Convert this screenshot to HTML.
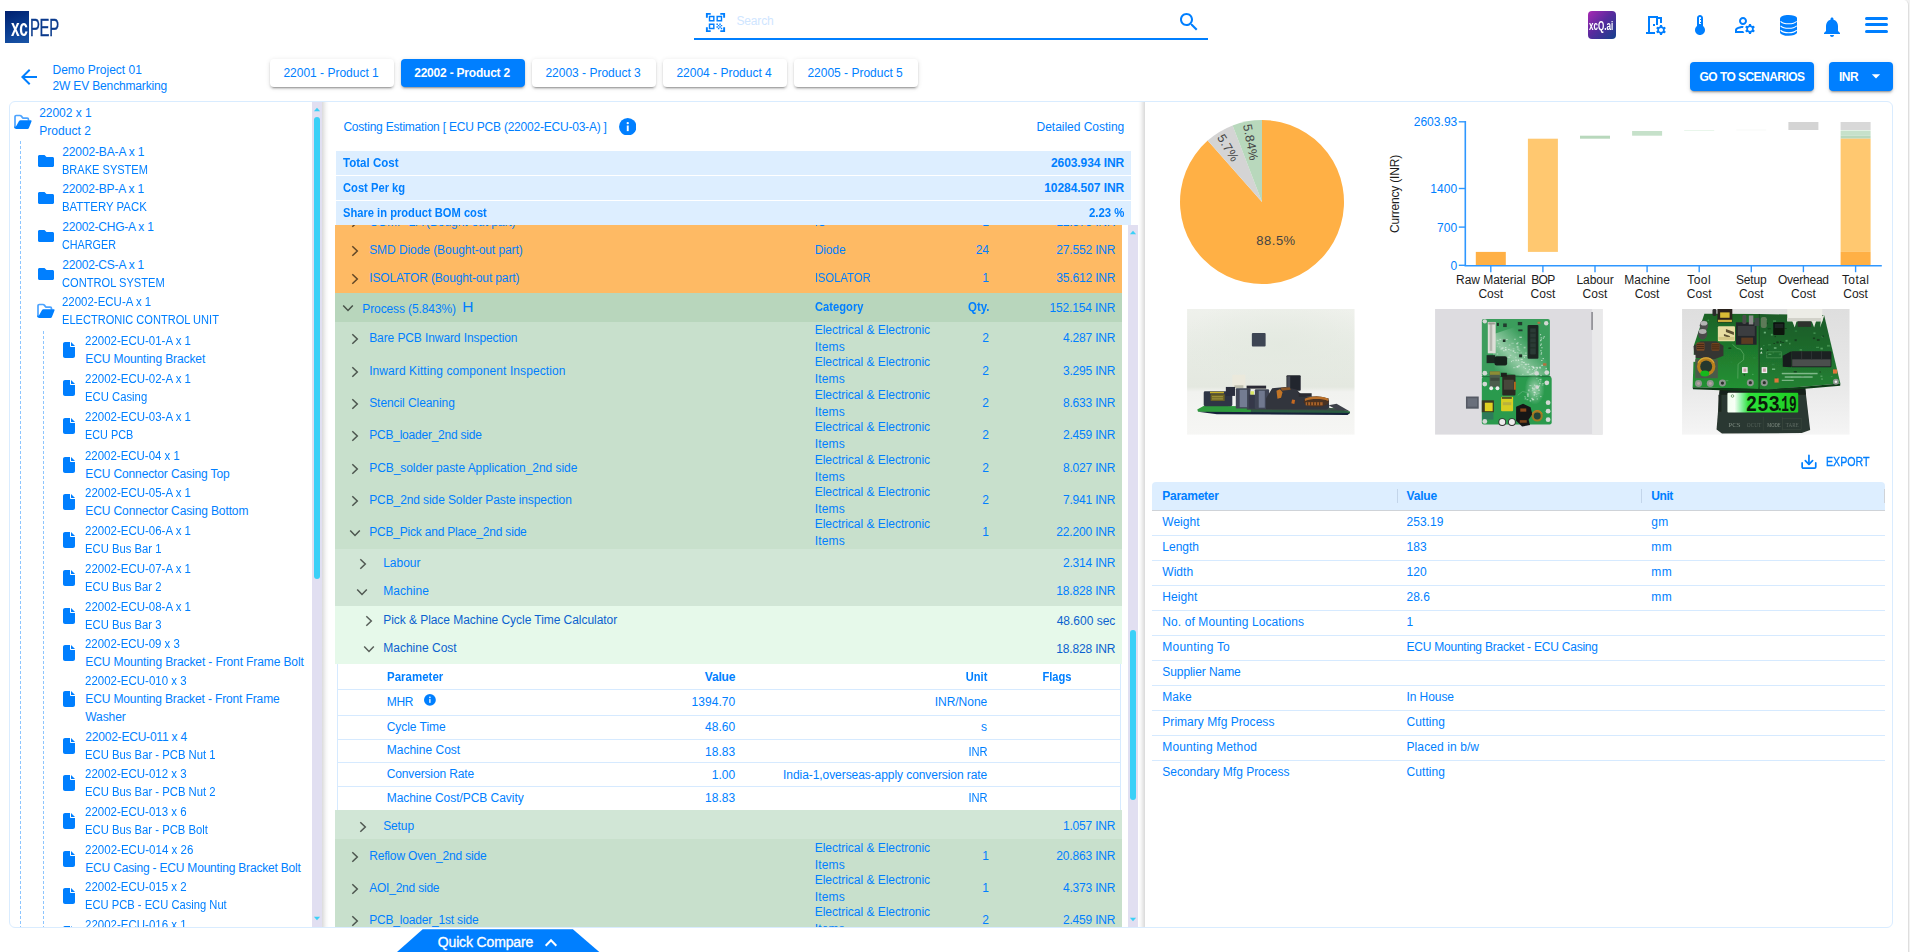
<!DOCTYPE html>
<html>
<head>
<meta charset="utf-8">
<title>xcPEP</title>
<style>
*{box-sizing:border-box;margin:0;padding:0}
html,body{width:1910px;height:952px;overflow:hidden;background:#fff}
body{font-family:"Liberation Sans",sans-serif;font-size:12px;color:#007fff;position:relative}
.abs{position:absolute}
.gutter{position:absolute;left:0;top:0;width:1910px;height:952px;background:#f2f2f2}
.gutter:after{content:'';position:absolute;left:0;top:0;width:1907.500px;height:960px;background:#fff;border-right:1px solid #dedede;border-top-right-radius:5px}
/* header */
.logo-box{position:absolute;left:5px;top:11px;width:24px;height:32px;background:linear-gradient(160deg,#00206e 0%,#0a3d91 55%,#1a56a8 100%)}
.logo-xc{position:absolute;left:10.500px;top:14px;font-size:23px;line-height:28px;color:#fff;font-weight:bold;transform:scaleX(.67);transform-origin:0 0;letter-spacing:-.5px}

.logo-pep{position:absolute;left:29.500px;top:14px;-webkit-text-stroke:.35px #0a3a8c;font-size:24px;line-height:28px;color:#0a3a8c;transform:scaleX(.62);transform-origin:0 0;letter-spacing:-.5px}
.search-line{position:absolute;left:694px;top:38px;width:514px;height:2px;background:#007fff}
.search-ph{position:absolute;left:736.500px;top:13.700px;font-size:12px;line-height:14px;color:#cfe6ff;letter-spacing:-.17px}
.tab{position:absolute;top:59px;width:124px;height:28px;border-radius:4px;background:#fff;box-shadow:0 3px 1px -2px rgba(0,0,0,.2),0 2px 2px 0 rgba(0,0,0,.14),0 1px 5px 0 rgba(0,0,0,.12);text-align:center;padding-right:1.800px;line-height:28px;font-size:12px;color:#007fff;white-space:nowrap}
.tab.on{background:#007fff;color:#fff;font-weight:bold;letter-spacing:-.21px}
.btn{position:absolute;top:62px;height:29px;border-radius:4px;background:#007fff;color:#fff;font-weight:bold;font-size:12px;line-height:31px;box-shadow:0 3px 1px -2px rgba(0,0,0,.2),0 2px 2px 0 rgba(0,0,0,.14),0 1px 5px 0 rgba(0,0,0,.12);white-space:nowrap;letter-spacing:-.55px}
.proj{position:absolute;left:52.500px;font-size:12px;line-height:16px;white-space:nowrap}
/* main frame */
.frame{position:absolute;left:9px;top:101px;width:1884px;height:827px;border:1px solid #d9ecff;border-radius:6px}
</style>
</head>
<body>
<div class="gutter"></div>

<!-- HEADER -->
<div class="logo-box"></div>
<div class="logo-xc">xc</div>
<div class="logo-pep">PEP</div>

<svg class="abs" style="left:703.500px;top:10.500px" width="23" height="23" viewBox="0 0 24 24" fill="#007fff"><path d="M9.5 6.500v3h-3v-3h3M11 5H5v6h6V5zm-1.500 9.500v3h-3v-3h3M11 13H5v6h6v-6zm6.500-6.500v3h-3v-3h3M19 5h-6v6h6V5zm-6 8h1.500v1.500H13V13zm1.500 1.500H16V16h-1.500v-1.500zM16 13h1.500v1.500H16V13zm-3 3h1.500v1.500H13V16zm1.500 1.500H16V19h-1.500v-1.500zM16 16h1.500v1.500H16V16zm1.500-1.500H19V16h-1.500v-1.500zm0 3H19V19h-1.500v-1.500zM22 7h-2V4h-3V2h5v5zm0 15v-5h-2v3h-3v2h5zM2 22h5v-2H4v-3H2v5zM2 2v5h2V4h3V2H2z"/></svg>
<div class="search-ph">Search</div>
<svg class="abs" style="left:1176.600px;top:10.300px" width="24" height="24" viewBox="0 0 24 24" fill="#007fff"><path d="M15.500 14h-.790l-.280-.270C15.410 12.590 16 11.110 16 9.500 16 5.910 13.090 3 9.500 3S3 5.910 3 9.500 5.910 16 9.500 16c1.610 0 3.090-.590 4.230-1.570l.270.280v.790l5 4.990L20.490 19l-4.990-5zm-6 0C7.010 14 5 11.990 5 9.500S7.010 5 9.500 5 14 7.010 14 9.500 11.990 14 9.500 14z"/></svg>
<div class="search-line"></div>

<!-- header right icons -->
<div class="abs" style="left:1588px;top:11px;width:28px;height:28px;border-radius:4px;background:linear-gradient(135deg,#a928b4 0%,#5a2a9e 45%,#12408c 100%)"></div>
<div class="abs" style="left:1589px;top:17.500px;width:60px;font-size:13px;line-height:16px;color:#fff;font-weight:bold;transform:scaleX(.62);transform-origin:0 0;white-space:nowrap">xcQ.ai</div>
<svg class="abs" style="left:1643px;top:13px" width="24" height="24" viewBox="0 0 24 24" fill="#007fff"><path d="M21.690 16.370l1.140-1-1-1.730-1.450.490c-.320-.270-.680-.480-1.080-.630L19 12h-2l-.300 1.490c-.400.150-.760.360-1.080.630l-1.450-.490-1 1.730 1.140 1c-.080.500-.080.760 0 1.260l-1.140 1 1 1.730 1.450-.490c.320.270.680.480 1.080.630L17 22h2l.300-1.490c.400-.150.760-.360 1.080-.630l1.450.490 1-1.730-1.140-1c.080-.510.080-.770 0-1.270zM18 19c-1.100 0-2-.900-2-2s.900-2 2-2 2 .900 2 2-.900 2-2 2zM19 4v6h-2V6h-2v6h-2V5H7v14h5v2H3v-2h2V3h10v1h4zm-7 9h-2v-2h2v2z"/></svg>
<svg class="abs" style="left:1688px;top:13px" width="24" height="24" viewBox="0 0 24 24" fill="#007fff"><path d="M15 13V5c0-1.660-1.340-3-3-3S9 3.340 9 5v8c-1.210.910-2 2.370-2 4 0 2.760 2.240 5 5 5s5-2.240 5-5c0-1.630-.790-3.090-2-4zm-4-2V5c0-.550.450-1 1-1s1 .450 1 1v1h-1v1h1v2h-1v1h1v1h-2z"/></svg>
<svg class="abs" style="left:1733px;top:13px" width="24" height="24" viewBox="0 0 24 24" fill="#007fff"><path d="M4 18v-.650c0-.340.160-.660.410-.810C6.100 15.530 8.030 15 10 15c.030 0 .050 0 .080.010.1-.7.300-1.370.590-1.980-.220-.020-.440-.030-.670-.030-2.420 0-4.680.670-6.610 1.820-.880.520-1.390 1.500-1.390 2.530V20h9.260c-.420-.600-.750-1.280-.970-2H4zm6-6c2.210 0 4-1.790 4-4s-1.790-4-4-4-4 1.790-4 4 1.790 4 4 4zm0-6c1.100 0 2 .900 2 2s-.900 2-2 2-2-.900-2-2 .900-2 2-2zm10.750 10c0-.220-.030-.420-.060-.630l1.140-1.010-1-1.730-1.450.490c-.320-.270-.680-.480-1.080-.630L18 11h-2l-.300 1.490c-.400.150-.760.360-1.080.630l-1.450-.490-1 1.730 1.140 1.010c-.030.210-.060.410-.060.630s.030.420.060.630l-1.140 1.010 1 1.730 1.450-.490c.320.270.680.480 1.080.630L16 21h2l.300-1.490c.400-.150.760-.360 1.080-.630l1.450.490 1-1.730-1.140-1.010c.030-.210.060-.410.060-.630zM17 18c-1.100 0-2-.900-2-2s.900-2 2-2 2 .900 2 2-.900 2-2 2z"/></svg>
<svg class="abs" style="left:1779.800px;top:14.800px" width="17.300" height="20.800" viewBox="0 0 18 21" preserveAspectRatio="none"><path fill="#007fff" d="M9 0C4 0 0 1.600 0 3.700V17.300C0 19.400 4 21 9 21s9-1.600 9-3.700V3.700C18 1.600 14 0 9 0z"/><g fill="none" stroke="#fff" stroke-width="1.100"><path d="M.6 6.400C2.400 8.200 5.500 8.900 9 8.900s6.600-.7 8.400-2.500"/><path d="M.6 10.900c1.800 1.800 4.900 2.500 8.400 2.500s6.600-.7 8.400-2.500"/><path d="M.6 15.400c1.800 1.800 4.900 2.500 8.400 2.500s6.600-.7 8.400-2.500"/></g></svg>
<svg class="abs" style="left:1820px;top:14.500px" width="24" height="24" viewBox="0 0 24 24" fill="#007fff"><path d="M12 22c1.100 0 2-.900 2-2h-4c0 1.100.890 2 2 2zm6-6v-5c0-3.070-1.640-5.640-4.500-6.320V4c0-.830-.670-1.500-1.500-1.500s-1.500.670-1.500 1.500v.680C7.630 5.360 6 7.920 6 11v5l-2 2v1h16v-1l-2-2z"/></svg>
<div class="abs" style="left:1865.300px;top:17px;width:22.800px;height:3.200px;border-radius:2px;background:#007fff"></div>
<div class="abs" style="left:1865.300px;top:23.300px;width:22.800px;height:3.200px;border-radius:2px;background:#007fff"></div>
<div class="abs" style="left:1865.300px;top:30px;width:22.800px;height:3.200px;border-radius:2px;background:#007fff"></div>

<!-- second row -->
<svg class="abs" style="left:17px;top:65px" width="24" height="24" viewBox="0 0 24 24" fill="#007fff"><path d="M20 11H7.830l5.590-5.590L12 4l-8 8 8 8 1.410-1.410L7.830 13H20v-2z"/></svg>
<div class="proj" style="top:62px">Demo Project 01</div>
<div class="proj" style="top:78px;letter-spacing:-.155px">2W EV Benchmarking</div>
<div class="tab" style="left:270px">22001 - Product 1</div>
<div class="tab on" style="left:401px">22002 - Product 2</div>
<div class="tab" style="left:532px">22003 - Product 3</div>
<div class="tab" style="left:663px">22004 - Product 4</div>
<div class="tab" style="left:794px">22005 - Product 5</div>
<div class="btn" style="left:1690px;width:124px;text-align:center">GO TO SCENARIOS</div>
<div class="btn" style="left:1829px;width:64px;padding-left:10px">INR</div>
<svg class="abs" style="left:1866px;top:65.500px" width="20" height="20" viewBox="0 0 24 24" fill="#fff"><path d="M7 10l5 5 5-5z"/></svg>

<div class="frame"></div>


<!-- LEFT -->
<style>
.lp{position:absolute;left:10px;top:101px;width:302px;height:826px;overflow:hidden;border-radius:7px 0 0 7px}
.ti{position:absolute}
.tl{position:absolute;white-space:nowrap;font-size:12px;line-height:18px;height:18px}
.dash{position:absolute;width:1px;background:repeating-linear-gradient(180deg,#8cc5ff 0,#8cc5ff 3px,transparent 3px,transparent 5px)}
.sb{position:absolute;background:#e1dff1}
.sbt{position:absolute;background:#3bd0f7;border-radius:3px}
</style>
<div class="lp">
<div class="tl" style="left:29.2px;top:3px;letter-spacing:-0.041px">22002 x 1</div>
<div class="tl" style="left:29.2px;top:21px;letter-spacing:0.046px">Product 2</div>
<svg class="ti" style="left:4.0px;top:13.30px" width="18" height="16" viewBox="0 0 18 16"><path d="M1 13.200V2.800Q1 1.500 2.300 1.500H6Q6.800 1.500 7.300 2.100L8.500 3.600Q9 4.200 9.800 4.200H13.200Q14.500 4.200 14.500 5.500V5.900" fill="none" stroke="#4ea4ff" stroke-width="1.700" stroke-linecap="round"/><path d="M6.500 6.300H16.700Q17.900 6.300 17.500 7.400L14.900 14.100Q14.500 15 13.500 15H2.300Q.2 15 .2 13L.2 12.500 1.800 12.800 4.900 7.300Q5.400 6.300 6.500 6.300Z" fill="#007fff"/></svg>
<div class="tl" style="left:52.3px;top:42px;letter-spacing:-0.140px">22002-BA-A x 1</div>
<div class="tl" style="left:52.3px;top:60px;transform:scaleX(0.9205);transform-origin:0 50%">BRAKE SYSTEM</div>
<svg class="ti" style="left:28.2px;top:52.30px" width="16" height="16" viewBox="0 0 512 512"><path fill="#007fff" d="M464 128H272l-64-64H48C21.490 64 0 85.490 0 112v288c0 26.510 21.490 48 48 48h416c26.510 0 48-21.490 48-48V176c0-26.510-21.490-48-48-48z"/></svg>
<div class="tl" style="left:52.3px;top:79px;letter-spacing:-0.159px">22002-BP-A x 1</div>
<div class="tl" style="left:52.3px;top:97px;transform:scaleX(0.9509);transform-origin:0 50%">BATTERY PACK</div>
<svg class="ti" style="left:28.2px;top:89.30px" width="16" height="16" viewBox="0 0 512 512"><path fill="#007fff" d="M464 128H272l-64-64H48C21.490 64 0 85.490 0 112v288c0 26.510 21.490 48 48 48h416c26.510 0 48-21.490 48-48V176c0-26.510-21.490-48-48-48z"/></svg>
<div class="tl" style="left:52.3px;top:117px;letter-spacing:-0.226px">22002-CHG-A x 1</div>
<div class="tl" style="left:52.3px;top:135px;transform:scaleX(0.8992);transform-origin:0 50%">CHARGER</div>
<svg class="ti" style="left:28.2px;top:127.30px" width="16" height="16" viewBox="0 0 512 512"><path fill="#007fff" d="M464 128H272l-64-64H48C21.490 64 0 85.490 0 112v288c0 26.510 21.490 48 48 48h416c26.510 0 48-21.490 48-48V176c0-26.510-21.490-48-48-48z"/></svg>
<div class="tl" style="left:52.3px;top:155px;letter-spacing:-0.215px">22002-CS-A x 1</div>
<div class="tl" style="left:52.3px;top:173px;transform:scaleX(0.9265);transform-origin:0 50%">CONTROL SYSTEM</div>
<svg class="ti" style="left:28.2px;top:165.30px" width="16" height="16" viewBox="0 0 512 512"><path fill="#007fff" d="M464 128H272l-64-64H48C21.490 64 0 85.490 0 112v288c0 26.510 21.490 48 48 48h416c26.510 0 48-21.490 48-48V176c0-26.510-21.490-48-48-48z"/></svg>
<div class="tl" style="left:52.3px;top:192px;transform:scaleX(0.9551);transform-origin:0 50%">22002-ECU-A x 1</div>
<div class="tl" style="left:52.3px;top:210px;transform:scaleX(0.9217);transform-origin:0 50%">ELECTRONIC CONTROL UNIT</div>
<svg class="ti" style="left:27.0px;top:202.30px" width="18" height="16" viewBox="0 0 18 16"><path d="M1 13.200V2.800Q1 1.500 2.300 1.500H6Q6.800 1.500 7.300 2.100L8.500 3.600Q9 4.200 9.800 4.200H13.200Q14.500 4.200 14.500 5.500V5.900" fill="none" stroke="#4ea4ff" stroke-width="1.700" stroke-linecap="round"/><path d="M6.500 6.300H16.700Q17.900 6.300 17.500 7.400L14.900 14.100Q14.500 15 13.500 15H2.300Q.2 15 .2 13L.2 12.500 1.800 12.800 4.900 7.300Q5.400 6.300 6.500 6.300Z" fill="#007fff"/></svg>
<div class="tl" style="left:75.3px;top:231px;transform:scaleX(0.9571);transform-origin:0 50%">22002-ECU-01-A x 1</div>
<div class="tl" style="left:75.3px;top:249px;letter-spacing:-0.112px">ECU Mounting Bracket</div>
<svg class="ti" style="left:53.0px;top:241.30px" width="12" height="16" viewBox="0 0 384 512"><path fill="#007fff" d="M0 64C0 28.700 28.700 0 64 0H224V128c0 17.700 14.300 32 32 32H384V448c0 35.300-28.700 64-64 64H64c-35.300 0-64-28.700-64-64V64zm384 64H256V0L384 128z"/></svg>
<div class="tl" style="left:75.3px;top:269px;transform:scaleX(0.9571);transform-origin:0 50%">22002-ECU-02-A x 1</div>
<div class="tl" style="left:75.3px;top:287px;transform:scaleX(0.9416);transform-origin:0 50%">ECU Casing</div>
<svg class="ti" style="left:53.0px;top:279.30px" width="12" height="16" viewBox="0 0 384 512"><path fill="#007fff" d="M0 64C0 28.700 28.700 0 64 0H224V128c0 17.700 14.300 32 32 32H384V448c0 35.300-28.700 64-64 64H64c-35.300 0-64-28.700-64-64V64zm384 64H256V0L384 128z"/></svg>
<div class="tl" style="left:75.3px;top:307px;transform:scaleX(0.9571);transform-origin:0 50%">22002-ECU-03-A x 1</div>
<div class="tl" style="left:75.3px;top:325px;transform:scaleX(0.9042);transform-origin:0 50%">ECU PCB</div>
<svg class="ti" style="left:53.0px;top:317.30px" width="12" height="16" viewBox="0 0 384 512"><path fill="#007fff" d="M0 64C0 28.700 28.700 0 64 0H224V128c0 17.700 14.300 32 32 32H384V448c0 35.300-28.700 64-64 64H64c-35.300 0-64-28.700-64-64V64zm384 64H256V0L384 128z"/></svg>
<div class="tl" style="left:75.3px;top:346px;transform:scaleX(0.9542);transform-origin:0 50%">22002-ECU-04 x 1</div>
<div class="tl" style="left:75.3px;top:364px;letter-spacing:-0.123px">ECU Connector Casing Top</div>
<svg class="ti" style="left:53.0px;top:356.30px" width="12" height="16" viewBox="0 0 384 512"><path fill="#007fff" d="M0 64C0 28.700 28.700 0 64 0H224V128c0 17.700 14.300 32 32 32H384V448c0 35.300-28.700 64-64 64H64c-35.300 0-64-28.700-64-64V64zm384 64H256V0L384 128z"/></svg>
<div class="tl" style="left:75.3px;top:383px;transform:scaleX(0.9571);transform-origin:0 50%">22002-ECU-05-A x 1</div>
<div class="tl" style="left:75.3px;top:401px;letter-spacing:-0.113px">ECU Connector Casing Bottom</div>
<svg class="ti" style="left:53.0px;top:393.30px" width="12" height="16" viewBox="0 0 384 512"><path fill="#007fff" d="M0 64C0 28.700 28.700 0 64 0H224V128c0 17.700 14.300 32 32 32H384V448c0 35.300-28.700 64-64 64H64c-35.300 0-64-28.700-64-64V64zm384 64H256V0L384 128z"/></svg>
<div class="tl" style="left:75.3px;top:421px;transform:scaleX(0.9571);transform-origin:0 50%">22002-ECU-06-A x 1</div>
<div class="tl" style="left:75.3px;top:439px;transform:scaleX(0.9391);transform-origin:0 50%">ECU Bus Bar 1</div>
<svg class="ti" style="left:53.0px;top:431.30px" width="12" height="16" viewBox="0 0 384 512"><path fill="#007fff" d="M0 64C0 28.700 28.700 0 64 0H224V128c0 17.700 14.300 32 32 32H384V448c0 35.300-28.700 64-64 64H64c-35.300 0-64-28.700-64-64V64zm384 64H256V0L384 128z"/></svg>
<div class="tl" style="left:75.3px;top:459px;transform:scaleX(0.9571);transform-origin:0 50%">22002-ECU-07-A x 1</div>
<div class="tl" style="left:75.3px;top:477px;transform:scaleX(0.9391);transform-origin:0 50%">ECU Bus Bar 2</div>
<svg class="ti" style="left:53.0px;top:469.30px" width="12" height="16" viewBox="0 0 384 512"><path fill="#007fff" d="M0 64C0 28.700 28.700 0 64 0H224V128c0 17.700 14.300 32 32 32H384V448c0 35.300-28.700 64-64 64H64c-35.300 0-64-28.700-64-64V64zm384 64H256V0L384 128z"/></svg>
<div class="tl" style="left:75.3px;top:497px;transform:scaleX(0.9571);transform-origin:0 50%">22002-ECU-08-A x 1</div>
<div class="tl" style="left:75.3px;top:515px;transform:scaleX(0.9391);transform-origin:0 50%">ECU Bus Bar 3</div>
<svg class="ti" style="left:53.0px;top:507.30px" width="12" height="16" viewBox="0 0 384 512"><path fill="#007fff" d="M0 64C0 28.700 28.700 0 64 0H224V128c0 17.700 14.300 32 32 32H384V448c0 35.300-28.700 64-64 64H64c-35.300 0-64-28.700-64-64V64zm384 64H256V0L384 128z"/></svg>
<div class="tl" style="left:75.3px;top:534px;transform:scaleX(0.9542);transform-origin:0 50%">22002-ECU-09 x 3</div>
<div class="tl" style="left:75.3px;top:552px;letter-spacing:-0.112px">ECU Mounting Bracket - Front Frame Bolt</div>
<svg class="ti" style="left:53.0px;top:544.30px" width="12" height="16" viewBox="0 0 384 512"><path fill="#007fff" d="M0 64C0 28.700 28.700 0 64 0H224V128c0 17.700 14.300 32 32 32H384V448c0 35.300-28.700 64-64 64H64c-35.300 0-64-28.700-64-64V64zm384 64H256V0L384 128z"/></svg>
<div class="tl" style="left:75.3px;top:571px;transform:scaleX(0.9578);transform-origin:0 50%">22002-ECU-010 x 3</div>
<div class="tl" style="left:75.3px;top:589px;letter-spacing:-0.132px">ECU Mounting Bracket - Front Frame</div>
<div class="tl" style="left:75.3px;top:607px;letter-spacing:-0.086px">Washer</div>
<svg class="ti" style="left:53.0px;top:590.30px" width="12" height="16" viewBox="0 0 384 512"><path fill="#007fff" d="M0 64C0 28.700 28.700 0 64 0H224V128c0 17.700 14.300 32 32 32H384V448c0 35.300-28.700 64-64 64H64c-35.300 0-64-28.700-64-64V64zm384 64H256V0L384 128z"/></svg>
<div class="tl" style="left:75.3px;top:627px;letter-spacing:-0.211px">22002-ECU-011 x 4</div>
<div class="tl" style="left:75.3px;top:645px;transform:scaleX(0.9414);transform-origin:0 50%">ECU Bus Bar - PCB Nut 1</div>
<svg class="ti" style="left:53.0px;top:637.30px" width="12" height="16" viewBox="0 0 384 512"><path fill="#007fff" d="M0 64C0 28.700 28.700 0 64 0H224V128c0 17.700 14.300 32 32 32H384V448c0 35.300-28.700 64-64 64H64c-35.300 0-64-28.700-64-64V64zm384 64H256V0L384 128z"/></svg>
<div class="tl" style="left:75.3px;top:664px;transform:scaleX(0.9578);transform-origin:0 50%">22002-ECU-012 x 3</div>
<div class="tl" style="left:75.3px;top:682px;transform:scaleX(0.9414);transform-origin:0 50%">ECU Bus Bar - PCB Nut 2</div>
<svg class="ti" style="left:53.0px;top:674.30px" width="12" height="16" viewBox="0 0 384 512"><path fill="#007fff" d="M0 64C0 28.700 28.700 0 64 0H224V128c0 17.700 14.300 32 32 32H384V448c0 35.300-28.700 64-64 64H64c-35.300 0-64-28.700-64-64V64zm384 64H256V0L384 128z"/></svg>
<div class="tl" style="left:75.3px;top:702px;transform:scaleX(0.9578);transform-origin:0 50%">22002-ECU-013 x 6</div>
<div class="tl" style="left:75.3px;top:720px;transform:scaleX(0.9405);transform-origin:0 50%">ECU Bus Bar - PCB Bolt</div>
<svg class="ti" style="left:53.0px;top:712.30px" width="12" height="16" viewBox="0 0 384 512"><path fill="#007fff" d="M0 64C0 28.700 28.700 0 64 0H224V128c0 17.700 14.300 32 32 32H384V448c0 35.300-28.700 64-64 64H64c-35.300 0-64-28.700-64-64V64zm384 64H256V0L384 128z"/></svg>
<div class="tl" style="left:75.3px;top:740px;transform:scaleX(0.9608);transform-origin:0 50%">22002-ECU-014 x 26</div>
<div class="tl" style="left:75.3px;top:758px;letter-spacing:-0.194px">ECU Casing - ECU Mounting Bracket Bolt</div>
<svg class="ti" style="left:53.0px;top:750.30px" width="12" height="16" viewBox="0 0 384 512"><path fill="#007fff" d="M0 64C0 28.700 28.700 0 64 0H224V128c0 17.700 14.300 32 32 32H384V448c0 35.300-28.700 64-64 64H64c-35.300 0-64-28.700-64-64V64zm384 64H256V0L384 128z"/></svg>
<div class="tl" style="left:75.3px;top:777px;transform:scaleX(0.9578);transform-origin:0 50%">22002-ECU-015 x 2</div>
<div class="tl" style="left:75.3px;top:795px;transform:scaleX(0.9321);transform-origin:0 50%">ECU PCB - ECU Casing Nut</div>
<svg class="ti" style="left:53.0px;top:787.30px" width="12" height="16" viewBox="0 0 384 512"><path fill="#007fff" d="M0 64C0 28.700 28.700 0 64 0H224V128c0 17.700 14.300 32 32 32H384V448c0 35.300-28.700 64-64 64H64c-35.300 0-64-28.700-64-64V64zm384 64H256V0L384 128z"/></svg>
<div class="tl" style="left:75.3px;top:815px;transform:scaleX(0.9578);transform-origin:0 50%">22002-ECU-016 x 1</div>
<div class="tl" style="left:75.3px;top:833px;transform:scaleX(0.9334);transform-origin:0 50%">ECU Casing - ECU PCB Bolt</div>
<svg class="ti" style="left:53.0px;top:825.30px" width="12" height="16" viewBox="0 0 384 512"><path fill="#007fff" d="M0 64C0 28.700 28.700 0 64 0H224V128c0 17.700 14.300 32 32 32H384V448c0 35.300-28.700 64-64 64H64c-35.300 0-64-28.700-64-64V64zm384 64H256V0L384 128z"/></svg>
<div class="dash" style="left:10px;top:40px;height:800px"></div>
<div class="dash" style="left:33px;top:230px;height:600px"></div>
</div>
<div class="sb" style="left:312.200px;top:102px;width:9.900px;height:825px"></div>
<div class="sbt" style="left:313.900px;top:116.800px;width:6.200px;height:462px"></div>
<svg class="abs" style="left:313px;top:106px" width="8" height="6" viewBox="0 0 8 6"><path fill="#3bd0f7" d="M.9 5.200L4 1.800 7.100 5.200z"/></svg>
<svg class="abs" style="left:313px;top:915px" width="8" height="6" viewBox="0 0 8 6"><path fill="#3bd0f7" d="M.9 1.800L4 5.200 7.100 1.800z"/></svg>
<div class="abs" style="left:322.100px;top:102px;width:7px;height:825px;background:linear-gradient(90deg,rgba(0,0,0,.14),rgba(0,0,0,.03) 60%,rgba(0,0,0,0))"></div>
<!-- MID -->
<style>
.t{position:absolute;white-space:nowrap;font-size:12px;line-height:16px;height:16px}
.b{font-weight:bold}
.dk{color:#0b62cf}
.band{position:absolute;left:335px;width:787px}
.clip{position:absolute;left:0;top:225px;width:1910px;height:702px;overflow:hidden}
.clipin{position:absolute;left:0;top:-225px;width:1910px;height:952px}
.sum{position:absolute;left:336px;width:795px;height:24px;background:#ddeeff}
.hl{position:absolute;left:337px;width:783px;height:1px;background:#d6eaff}
</style>
<div class="t" style="top:119px;left:343.4px;letter-spacing:-0.215px;">Costing Estimation [ ECU PCB (22002-ECU-03-A) ]</div>
<svg class="abs" style="left:618.5px;top:117.8px" width="17.5" height="17.5" viewBox="0 0 20 20"><circle cx="10" cy="10" r="10" fill="#007fff"/><rect x="8.900" y="8.600" width="2.200" height="6.400" fill="#fff"/><circle cx="10" cy="5.800" r="1.350" fill="#fff"/></svg>
<div class="t" style="top:119px;right:785.8px;letter-spacing:-0.027px;">Detailed Costing</div>
<div class="clip"><div class="clipin">
<div class="band" style="top:200.0px;height:93.0px;background:#feba64"></div>
<div class="band" style="top:293.0px;height:28.8px;background:#b8d6bc"></div>
<div class="band" style="top:321.8px;height:227.0px;background:#c8e0cc"></div>
<div class="band" style="top:548.8px;height:56.8px;background:#d1e6d6"></div>
<div class="band" style="top:605.6px;height:58.6px;background:#e6f9ea"></div>
<div class="band" style="top:664.2px;height:146.2px;background:#ffffff"></div>
<div class="band" style="top:810.4px;height:28.4px;background:#d1e6d6"></div>
<div class="band" style="top:838.8px;height:101.2px;background:#c8e0cc"></div>
<div class="abs" style="left:336.600px;top:664.200px;width:784.400px;height:146.200px;background:#fff;border-left:1px solid #d6eaff;border-right:1px solid #d6eaff"></div>
<div class="hl" style="top:688.9px"></div>
<div class="hl" style="top:714.7px"></div>
<div class="hl" style="top:738.7px"></div>
<div class="hl" style="top:762.0px"></div>
<div class="hl" style="top:786.0px"></div>
<svg class="abs" style="left:351.0px;top:216.3px" width="8" height="12" viewBox="0 0 8 12"><path d="M1.300 1.200L6.300 6 1.300 10.800" fill="none" stroke="rgba(0,0,0,.62)" stroke-width="1.500"/></svg>
<div class="t" style="top:214px;left:369.2px;letter-spacing:-0.069px;">COMP-2A (Bought-out part)</div>
<div class="t" style="top:214px;left:814.7px;transform:scaleX(0.9229);transform-origin:0 50%;">IC</div>
<div class="t" style="top:214px;right:920.9px;letter-spacing:0.066px;">1</div>
<div class="t" style="top:214px;right:794.7px;letter-spacing:-0.166px;">12.375 INR</div>
<svg class="abs" style="left:351.0px;top:245.0px" width="8" height="12" viewBox="0 0 8 12"><path d="M1.300 1.200L6.300 6 1.300 10.800" fill="none" stroke="rgba(0,0,0,.62)" stroke-width="1.500"/></svg>
<div class="t" style="top:242px;left:369.2px;letter-spacing:-0.069px;">SMD Diode (Bought-out part)</div>
<div class="t" style="top:242px;left:814.7px;letter-spacing:-0.122px;">Diode</div>
<div class="t" style="top:242px;right:920.9px;letter-spacing:0.066px;">24</div>
<div class="t" style="top:242px;right:794.7px;letter-spacing:-0.166px;">27.552 INR</div>
<svg class="abs" style="left:351.0px;top:273.0px" width="8" height="12" viewBox="0 0 8 12"><path d="M1.300 1.200L6.300 6 1.300 10.800" fill="none" stroke="rgba(0,0,0,.62)" stroke-width="1.500"/></svg>
<div class="t" style="top:270px;left:369.2px;letter-spacing:-0.135px;">ISOLATOR (Bought-out part)</div>
<div class="t" style="top:270px;left:814.7px;transform:scaleX(0.9357);transform-origin:0 50%;">ISOLATOR</div>
<div class="t" style="top:270px;right:920.9px;letter-spacing:0.066px;">1</div>
<div class="t" style="top:270px;right:794.7px;letter-spacing:-0.166px;">35.612 INR</div>
<svg class="abs" style="left:341.7px;top:304.2px" width="12" height="8" viewBox="0 0 12 8"><path d="M1.200 1.500L6 6.500 10.800 1.500" fill="none" stroke="rgba(0,0,0,.62)" stroke-width="1.500"/></svg>
<div class="t" style="top:301px;left:362.3px;letter-spacing:-0.108px;">Process (5.843%)</div>
<div class="t" style="left:462.200px;top:297px;font-size:15.500px;line-height:20px;height:20px">H</div>
<div class="t b" style="top:299px;left:814.7px;transform:scaleX(0.9319);transform-origin:0 50%;">Category</div>
<div class="t b" style="top:299px;right:920.9px;transform:scaleX(0.9581);transform-origin:100% 50%;">Qty.</div>
<div class="t" style="top:300px;right:794.7px;letter-spacing:-0.145px;">152.154 INR</div>
<svg class="abs" style="left:351.1px;top:332.9px" width="8" height="12" viewBox="0 0 8 12"><path d="M1.300 1.200L6.300 6 1.300 10.800" fill="none" stroke="rgba(0,0,0,.62)" stroke-width="1.500"/></svg>
<div class="t" style="top:330px;left:369.2px;letter-spacing:-0.097px;">Bare PCB Inward Inspection</div>
<div class="t" style="top:322px;left:814.7px;letter-spacing:-0.028px;">Electrical &amp; Electronic</div><div class="t" style="top:339px;left:814.7px;letter-spacing:0.184px;">Items</div>
<div class="t" style="top:330px;right:920.9px;letter-spacing:0.066px;">2</div>
<div class="t" style="top:330px;right:794.7px;letter-spacing:-0.192px;">4.287 INR</div>
<svg class="abs" style="left:351.1px;top:365.9px" width="8" height="12" viewBox="0 0 8 12"><path d="M1.300 1.200L6.300 6 1.300 10.800" fill="none" stroke="rgba(0,0,0,.62)" stroke-width="1.500"/></svg>
<div class="t" style="top:363px;left:369.2px;letter-spacing:0.080px;">Inward Kitting component Inspection</div>
<div class="t" style="top:354px;left:814.7px;letter-spacing:-0.028px;">Electrical &amp; Electronic</div><div class="t" style="top:371px;left:814.7px;letter-spacing:0.184px;">Items</div>
<div class="t" style="top:363px;right:920.9px;letter-spacing:0.066px;">2</div>
<div class="t" style="top:363px;right:794.7px;letter-spacing:-0.192px;">3.295 INR</div>
<svg class="abs" style="left:351.1px;top:397.9px" width="8" height="12" viewBox="0 0 8 12"><path d="M1.300 1.200L6.300 6 1.300 10.800" fill="none" stroke="rgba(0,0,0,.62)" stroke-width="1.500"/></svg>
<div class="t" style="top:395px;left:369.2px;letter-spacing:-0.071px;">Stencil Cleaning</div>
<div class="t" style="top:387px;left:814.7px;letter-spacing:-0.028px;">Electrical &amp; Electronic</div><div class="t" style="top:404px;left:814.7px;letter-spacing:0.184px;">Items</div>
<div class="t" style="top:395px;right:920.9px;letter-spacing:0.066px;">2</div>
<div class="t" style="top:395px;right:794.7px;letter-spacing:-0.192px;">8.633 INR</div>
<svg class="abs" style="left:351.1px;top:429.9px" width="8" height="12" viewBox="0 0 8 12"><path d="M1.300 1.200L6.300 6 1.300 10.800" fill="none" stroke="rgba(0,0,0,.62)" stroke-width="1.500"/></svg>
<div class="t" style="top:427px;left:369.2px;letter-spacing:-0.224px;">PCB_loader_2nd side</div>
<div class="t" style="top:419px;left:814.7px;letter-spacing:-0.028px;">Electrical &amp; Electronic</div><div class="t" style="top:436px;left:814.7px;letter-spacing:0.184px;">Items</div>
<div class="t" style="top:427px;right:920.9px;letter-spacing:0.066px;">2</div>
<div class="t" style="top:427px;right:794.7px;letter-spacing:-0.192px;">2.459 INR</div>
<svg class="abs" style="left:351.1px;top:462.9px" width="8" height="12" viewBox="0 0 8 12"><path d="M1.300 1.200L6.300 6 1.300 10.800" fill="none" stroke="rgba(0,0,0,.62)" stroke-width="1.500"/></svg>
<div class="t" style="top:460px;left:369.2px;letter-spacing:-0.056px;">PCB_solder paste Application_2nd side</div>
<div class="t" style="top:452px;left:814.7px;letter-spacing:-0.028px;">Electrical &amp; Electronic</div><div class="t" style="top:469px;left:814.7px;letter-spacing:0.184px;">Items</div>
<div class="t" style="top:460px;right:920.9px;letter-spacing:0.066px;">2</div>
<div class="t" style="top:460px;right:794.7px;letter-spacing:-0.192px;">8.027 INR</div>
<svg class="abs" style="left:351.1px;top:495.2px" width="8" height="12" viewBox="0 0 8 12"><path d="M1.300 1.200L6.300 6 1.300 10.800" fill="none" stroke="rgba(0,0,0,.62)" stroke-width="1.500"/></svg>
<div class="t" style="top:492px;left:369.2px;letter-spacing:-0.099px;">PCB_2nd side Solder Paste inspection</div>
<div class="t" style="top:484px;left:814.7px;letter-spacing:-0.028px;">Electrical &amp; Electronic</div><div class="t" style="top:501px;left:814.7px;letter-spacing:0.184px;">Items</div>
<div class="t" style="top:492px;right:920.9px;letter-spacing:0.066px;">2</div>
<div class="t" style="top:492px;right:794.7px;letter-spacing:-0.192px;">7.941 INR</div>
<svg class="abs" style="left:349.1px;top:529.0px" width="12" height="8" viewBox="0 0 12 8"><path d="M1.200 1.500L6 6.500 10.800 1.500" fill="none" stroke="rgba(0,0,0,.62)" stroke-width="1.500"/></svg>
<div class="t" style="top:524px;left:369.2px;letter-spacing:-0.199px;">PCB_Pick and Place_2nd side</div>
<div class="t" style="top:516px;left:814.7px;letter-spacing:-0.028px;">Electrical &amp; Electronic</div><div class="t" style="top:533px;left:814.7px;letter-spacing:0.184px;">Items</div>
<div class="t" style="top:524px;right:920.9px;letter-spacing:0.066px;">1</div>
<div class="t" style="top:524px;right:794.7px;letter-spacing:-0.166px;">22.200 INR</div>
<svg class="abs" style="left:358.6px;top:558.0px" width="8" height="12" viewBox="0 0 8 12"><path d="M1.300 1.200L6.300 6 1.300 10.800" fill="none" stroke="rgba(0,0,0,.62)" stroke-width="1.500"/></svg>
<div class="t" style="top:555px;left:383.2px;letter-spacing:-0.021px;">Labour</div>
<div class="t" style="top:555px;right:794.7px;letter-spacing:-0.192px;">2.314 INR</div>
<svg class="abs" style="left:356.3px;top:587.6px" width="12" height="8" viewBox="0 0 12 8"><path d="M1.200 1.500L6 6.500 10.800 1.500" fill="none" stroke="rgba(0,0,0,.62)" stroke-width="1.500"/></svg>
<div class="t" style="top:583px;left:383.2px;letter-spacing:0.061px;">Machine</div>
<div class="t" style="top:583px;right:794.7px;letter-spacing:-0.166px;">18.828 INR</div>
<svg class="abs" style="left:365.0px;top:615.3px" width="8" height="12" viewBox="0 0 8 12"><path d="M1.300 1.200L6.300 6 1.300 10.800" fill="none" stroke="rgba(0,0,0,.62)" stroke-width="1.500"/></svg>
<div class="t dk" style="top:612px;left:383.2px;letter-spacing:-0.051px;">Pick &amp; Place Machine Cycle Time Calculator</div>
<div class="t dk" style="top:613px;right:794.7px;letter-spacing:-0.004px;">48.600 sec</div>
<svg class="abs" style="left:363.2px;top:644.8px" width="12" height="8" viewBox="0 0 12 8"><path d="M1.200 1.500L6 6.500 10.800 1.500" fill="none" stroke="rgba(0,0,0,.62)" stroke-width="1.500"/></svg>
<div class="t dk" style="top:640px;left:383.2px;letter-spacing:0.013px;">Machine Cost</div>
<div class="t dk" style="top:641px;right:794.7px;letter-spacing:-0.166px;">18.828 INR</div>
<div class="t b" style="top:669px;left:386.7px;transform:scaleX(0.9586);transform-origin:0 50%;">Parameter</div>
<div class="t b" style="top:669px;right:1174.8px;letter-spacing:-0.182px;">Value</div>
<div class="t b" style="top:669px;right:922.8px;transform:scaleX(0.9223);transform-origin:100% 50%;">Unit</div>
<div class="t b" style="top:669px;left:957.2px;width:200px;text-align:center;transform:scaleX(0.9305);transform-origin:50% 50%;">Flags</div>
<div class="t" style="top:694px;left:386.7px;letter-spacing:-0.308px;">MHR</div>
<div class="t" style="top:694px;right:1174.8px;letter-spacing:0.033px;">1394.70</div>
<div class="t" style="top:694px;right:922.8px;letter-spacing:-0.020px;">INR/None</div>
<div class="t" style="top:719px;left:386.7px;letter-spacing:-0.040px;">Cycle Time</div>
<div class="t" style="top:719px;right:1174.8px;letter-spacing:0.019px;">48.60</div>
<div class="t" style="top:719px;right:922.8px;letter-spacing:0.188px;">s</div>
<div class="t" style="top:742px;left:386.7px;letter-spacing:0.013px;">Machine Cost</div>
<div class="t" style="top:744px;right:1174.8px;letter-spacing:0.019px;">18.83</div>
<div class="t" style="top:744px;right:922.8px;transform:scaleX(0.9291);transform-origin:100% 50%;">INR</div>
<div class="t" style="top:766px;left:386.7px;letter-spacing:-0.143px;">Conversion Rate</div>
<div class="t" style="top:767px;right:1174.8px;letter-spacing:0.007px;">1.00</div>
<div class="t" style="top:767px;right:922.8px;letter-spacing:-0.071px;">India-1,overseas-apply conversion rate</div>
<div class="t" style="top:790px;left:386.7px;letter-spacing:-0.047px;">Machine Cost/PCB Cavity</div>
<div class="t" style="top:790px;right:1174.8px;letter-spacing:0.019px;">18.83</div>
<div class="t" style="top:790px;right:922.8px;transform:scaleX(0.9291);transform-origin:100% 50%;">INR</div>
<svg class="abs" style="left:424.1px;top:694.2px" width="11.8" height="11.8" viewBox="0 0 20 20"><circle cx="10" cy="10" r="10" fill="#007fff"/><rect x="8.900" y="8.600" width="2.200" height="6.400" fill="#fff"/><circle cx="10" cy="5.800" r="1.350" fill="#fff"/></svg>
<svg class="abs" style="left:358.6px;top:821.2px" width="8" height="12" viewBox="0 0 8 12"><path d="M1.300 1.200L6.300 6 1.300 10.800" fill="none" stroke="rgba(0,0,0,.62)" stroke-width="1.500"/></svg>
<div class="t" style="top:818px;left:383.2px;letter-spacing:-0.121px;">Setup</div>
<div class="t" style="top:818px;right:794.7px;letter-spacing:-0.192px;">1.057 INR</div>
<svg class="abs" style="left:351.1px;top:851.0px" width="8" height="12" viewBox="0 0 8 12"><path d="M1.300 1.200L6.300 6 1.300 10.800" fill="none" stroke="rgba(0,0,0,.62)" stroke-width="1.500"/></svg>
<div class="t" style="top:848px;left:369.2px;letter-spacing:-0.165px;">Reflow Oven_2nd side</div>
<div class="t" style="top:840px;left:814.7px;letter-spacing:-0.028px;">Electrical &amp; Electronic</div><div class="t" style="top:857px;left:814.7px;letter-spacing:0.184px;">Items</div>
<div class="t" style="top:848px;right:920.9px;letter-spacing:0.066px;">1</div>
<div class="t" style="top:848px;right:794.7px;letter-spacing:-0.166px;">20.863 INR</div>
<svg class="abs" style="left:351.1px;top:883.3px" width="8" height="12" viewBox="0 0 8 12"><path d="M1.300 1.200L6.300 6 1.300 10.800" fill="none" stroke="rgba(0,0,0,.62)" stroke-width="1.500"/></svg>
<div class="t" style="top:880px;left:369.2px;letter-spacing:-0.217px;">AOI_2nd side</div>
<div class="t" style="top:872px;left:814.7px;letter-spacing:-0.028px;">Electrical &amp; Electronic</div><div class="t" style="top:889px;left:814.7px;letter-spacing:0.184px;">Items</div>
<div class="t" style="top:880px;right:920.9px;letter-spacing:0.066px;">1</div>
<div class="t" style="top:880px;right:794.7px;letter-spacing:-0.192px;">4.373 INR</div>
<svg class="abs" style="left:351.1px;top:914.9px" width="8" height="12" viewBox="0 0 8 12"><path d="M1.300 1.200L6.300 6 1.300 10.800" fill="none" stroke="rgba(0,0,0,.62)" stroke-width="1.500"/></svg>
<div class="t" style="top:912px;left:369.2px;letter-spacing:-0.186px;">PCB_loader_1st side</div>
<div class="t" style="top:904px;left:814.7px;letter-spacing:-0.028px;">Electrical &amp; Electronic</div><div class="t" style="top:921px;left:814.7px;letter-spacing:0.184px;">Items</div>
<div class="t" style="top:912px;right:920.9px;letter-spacing:0.066px;">2</div>
<div class="t" style="top:912px;right:794.7px;letter-spacing:-0.192px;">2.459 INR</div>
</div></div>
<div class="sum" style="top:151px"></div>
<div class="t b" style="top:155px;left:343.4px;transform:scaleX(0.9613);transform-origin:0 50%;">Total Cost</div>
<div class="t b" style="top:155px;right:785.8px;letter-spacing:-0.064px;">2603.934 INR</div>
<div class="sum" style="top:176px"></div>
<div class="t b" style="top:180px;left:343.4px;transform:scaleX(0.9317);transform-origin:0 50%;">Cost Per kg</div>
<div class="t b" style="top:180px;right:785.8px;letter-spacing:-0.051px;">10284.507 INR</div>
<div class="sum" style="top:201px"></div>
<div class="t b" style="top:205px;left:343.4px;transform:scaleX(0.9299);transform-origin:0 50%;">Share in product BOM cost</div>
<div class="t b" style="top:205px;right:785.8px;transform:scaleX(0.9483);transform-origin:100% 50%;">2.23 %</div>
<div class="sb" style="left:1128.100px;top:225px;width:9.900px;height:702px"></div>
<div class="sbt" style="left:1129.900px;top:629.500px;width:6.200px;height:170.500px"></div>
<svg class="abs" style="left:1129px;top:229px" width="8" height="6" viewBox="0 0 8 6"><path fill="#3bd0f7" d="M.9 5.200L4 1.800 7.100 5.200z"/></svg>
<svg class="abs" style="left:1129px;top:915.500px" width="8" height="6" viewBox="0 0 8 6"><path fill="#3bd0f7" d="M.9 1.800L4 5.200 7.100 1.800z"/></svg>
<div class="abs" style="left:1137.700px;top:102px;width:7.100px;height:825px;background:linear-gradient(90deg,rgba(0,0,0,0),rgba(0,0,0,.03) 40%,rgba(0,0,0,.15))"></div>
<!-- RIGHT -->
<style>
.ax{position:absolute;white-space:nowrap;font-size:12px;line-height:14px;height:14px}
.pt{position:absolute;left:1152px;width:733px}
</style>
<svg class="abs" style="left:0;top:0" width="1910" height="320" viewBox="0 0 1910 320">
<path d="M1262.00 202.00L1262.00 120.00A82.0 82.0 0 1 1 1207.67 140.59Z" fill="#ffb045"/>
<path d="M1262.00 202.00L1207.67 140.59A82.0 82.0 0 0 1 1232.61 125.45Z" fill="#d4d4d4"/>
<path d="M1262.00 202.00L1232.61 125.45A82.0 82.0 0 0 1 1262.00 120.00Z" fill="#b8d8bc"/>
<g font-family="Liberation Sans, sans-serif" font-size="13" fill="#444" text-anchor="middle" letter-spacing=".5">
<text x="1276" y="245.300">88.5%</text>
<text transform="translate(1250.900 142.300) rotate(79.500)" x="0" y="4.500" font-size="12.500" letter-spacing=".3">5.84%</text>
<text transform="translate(1228.200 147.800) rotate(58.750)" x="0" y="4.500" font-size="12.500" letter-spacing=".3">5.7%</text>
</g>
<rect x="1475.8" y="251.90" width="30" height="13.40" fill="#ffb045"/>
<rect x="1527.9" y="138.70" width="30" height="113.20" fill="#ffc870"/>
<rect x="1580.0" y="135.70" width="30" height="3.00" fill="#b8d8bc"/>
<rect x="1632.1" y="131.00" width="30" height="4.70" fill="#c6e1ca"/>
<rect x="1684.2" y="130.00" width="30" height="1.00" fill="#e9f6eb"/>
<rect x="1736.3" y="129.70" width="30" height="0.60" fill="#f1f6f2"/>
<rect x="1788.4" y="122.00" width="30" height="8.00" fill="#d4d4d4"/>
<rect x="1840.6" y="122.00" width="30" height="8.00" fill="#d8d8d8"/>
<rect x="1840.6" y="130.00" width="30" height="1.00" fill="#e3f1e5"/>
<rect x="1840.6" y="131.00" width="30" height="4.70" fill="#c6e1ca"/>
<rect x="1840.6" y="135.70" width="30" height="3.00" fill="#b8d8bc"/>
<rect x="1840.6" y="138.70" width="30" height="113.20" fill="#ffc870"/>
<rect x="1840.6" y="251.90" width="30" height="13.40" fill="#ffb045"/>
<path d="M1465.3 121.0V265.7H1881.800" fill="none" stroke="#2f97ff" stroke-width="1.600"/>
<path d="M1458.8 121.8H1465.3" stroke="#2f97ff" stroke-width="1.400"/>
<path d="M1458.8 188.5H1465.3" stroke="#2f97ff" stroke-width="1.400"/>
<path d="M1458.8 227.1H1465.3" stroke="#2f97ff" stroke-width="1.400"/>
<path d="M1458.8 265.3H1465.3" stroke="#2f97ff" stroke-width="1.400"/>
<path d="M1490.8 265.7V272.2" stroke="#2f97ff" stroke-width="1.400"/>
<path d="M1542.9 265.7V272.2" stroke="#2f97ff" stroke-width="1.400"/>
<path d="M1595.0 265.7V272.2" stroke="#2f97ff" stroke-width="1.400"/>
<path d="M1647.1 265.7V272.2" stroke="#2f97ff" stroke-width="1.400"/>
<path d="M1699.2 265.7V272.2" stroke="#2f97ff" stroke-width="1.400"/>
<path d="M1751.3 265.7V272.2" stroke="#2f97ff" stroke-width="1.400"/>
<path d="M1803.4 265.7V272.2" stroke="#2f97ff" stroke-width="1.400"/>
<path d="M1855.6 265.7V272.2" stroke="#2f97ff" stroke-width="1.400"/>
</svg>
<div class="ax" style="top:115px;color:#007fff;right:452.7px;letter-spacing:0.033px;">2603.93</div>
<div class="ax" style="top:182px;color:#007fff;right:452.7px;letter-spacing:0.066px;">1400</div>
<div class="ax" style="top:221px;color:#007fff;right:452.7px;letter-spacing:0.066px;">700</div>
<div class="ax" style="top:259px;color:#007fff;right:452.7px;letter-spacing:0.066px;">0</div>
<div class="ax" style="top:273px;color:#1c1c1c;left:1430.8px;width:120px;text-align:center;letter-spacing:-0.037px;">Raw Material</div>
<div class="ax" style="top:287px;color:#1c1c1c;left:1430.8px;width:120px;text-align:center;letter-spacing:0.022px;">Cost</div>
<div class="ax" style="top:273px;color:#1c1c1c;left:1482.9px;width:120px;text-align:center;letter-spacing:-0.679px;">BOP</div>
<div class="ax" style="top:287px;color:#1c1c1c;left:1482.9px;width:120px;text-align:center;letter-spacing:0.022px;">Cost</div>
<div class="ax" style="top:273px;color:#1c1c1c;left:1535.0px;width:120px;text-align:center;letter-spacing:-0.021px;">Labour</div>
<div class="ax" style="top:287px;color:#1c1c1c;left:1535.0px;width:120px;text-align:center;letter-spacing:0.022px;">Cost</div>
<div class="ax" style="top:273px;color:#1c1c1c;left:1587.1px;width:120px;text-align:center;letter-spacing:0.061px;">Machine</div>
<div class="ax" style="top:287px;color:#1c1c1c;left:1587.1px;width:120px;text-align:center;letter-spacing:0.022px;">Cost</div>
<div class="ax" style="top:273px;color:#1c1c1c;left:1639.2px;width:120px;text-align:center;letter-spacing:0.436px;">Tool</div>
<div class="ax" style="top:287px;color:#1c1c1c;left:1639.2px;width:120px;text-align:center;letter-spacing:0.022px;">Cost</div>
<div class="ax" style="top:273px;color:#1c1c1c;left:1691.3px;width:120px;text-align:center;letter-spacing:-0.121px;">Setup</div>
<div class="ax" style="top:287px;color:#1c1c1c;left:1691.3px;width:120px;text-align:center;letter-spacing:0.022px;">Cost</div>
<div class="ax" style="top:273px;color:#1c1c1c;left:1743.4px;width:120px;text-align:center;letter-spacing:-0.243px;">Overhead</div>
<div class="ax" style="top:287px;color:#1c1c1c;left:1743.4px;width:120px;text-align:center;letter-spacing:0.022px;">Cost</div>
<div class="ax" style="top:273px;color:#1c1c1c;left:1795.6px;width:120px;text-align:center;letter-spacing:0.404px;">Total</div>
<div class="ax" style="top:287px;color:#1c1c1c;left:1795.6px;width:120px;text-align:center;letter-spacing:0.022px;">Cost</div>
<div class="ax" style="left:1335px;top:187px;width:120px;text-align:center;color:#1c1c1c;transform:rotate(-90deg);letter-spacing:-0.197px">Currency (INR)</div>
<!-- ===== IMAGE 1 : side view ===== -->
<svg class="abs" style="left:1187.200px;top:309.200px" width="167.600" height="125.600" viewBox="0 0 168 126">
<defs>
<filter id="bl1" x="-5%" y="-5%" width="110%" height="110%"><feGaussianBlur stdDeviation=".55"/></filter>
<linearGradient id="bg1" x1="0" y1="0" x2="0" y2="1"><stop offset="0" stop-color="#eff1ec"/><stop offset=".35" stop-color="#e7ebe4"/><stop offset=".62" stop-color="#e4e8e0"/><stop offset=".66" stop-color="#f1f2ef"/><stop offset="1" stop-color="#f6f6f4"/></linearGradient>
<radialGradient id="bg1b" cx=".55" cy=".45" r=".6"><stop offset="0" stop-color="#e3e9e0" stop-opacity=".9"/><stop offset="1" stop-color="#e3e9e0" stop-opacity="0"/></radialGradient>
</defs>
<rect width="168" height="126" fill="url(#bg1)"/>
<rect width="168" height="82" fill="url(#bg1b)"/>
<g filter="url(#bl1)">
<rect x="65" y="24" width="13.800" height="13.700" rx="1" fill="#3c4452"/>
<rect x="45.400" y="66" width="13" height="11.500" fill="#ebe9dc"/>
<rect x="47.500" y="76.500" width="9" height="3" fill="#bdbdae"/>
<rect x="99.700" y="66.400" width="14.300" height="15.500" rx="1" fill="#24262d"/>
<rect x="100.500" y="67.500" width="3" height="13" fill="#4a4d58"/>
<!-- pcb -->
<path d="M10.200 100.800L17 97 60 97.500 150 99.500 163.600 103 163.200 104.600 40 103.800 11 103.200z" fill="#2e9a3c"/><path d="M64 100.200L150 101.200 163.600 103 163.200 104.600 64 104z" fill="#2a5c40"/>
<path d="M60 98L150 99.600 160 102.200 60 101z" fill="#3b4a44"/>
<path d="M11 103L163.300 104.400 161 106.400 30 105.600z" fill="#18223a"/>
<path d="M142 96.500L150 95 163 102.500 150 101z" fill="#3c4048"/>
<!-- left block -->
<rect x="16.700" y="82.500" width="28.700" height="15" rx="1.500" fill="#2f3444"/>
<rect x="23.700" y="85.600" width="14" height="6.600" fill="#6d6424"/>
<rect x="23" y="83" width="14" height="1.600" fill="#c9b228"/>
<rect x="25" y="87.500" width="11" height="1" fill="#a89a40"/><rect x="25" y="89.700" width="11" height="1" fill="#a89a40"/>
<rect x="38.900" y="78.200" width="9.200" height="9" fill="#2b2f3e"/>
<!-- caps -->
<rect x="48.900" y="79.500" width="14.700" height="20.400" rx="1" fill="#3f4555"/>
<rect x="52.800" y="81" width="7.400" height="17.500" fill="#737b92"/>
<rect x="59.700" y="76.900" width="19.600" height="3" fill="#2a2c34"/>
<rect x="63.600" y="82.500" width="3.500" height="3.600" fill="#dbe964"/>
<rect x="62" y="86" width="8" height="14" fill="#34394a"/>
<rect x="68" y="80.400" width="14.300" height="20" rx="1" fill="#3f4555"/>
<rect x="71.900" y="82" width="6.100" height="17" fill="#70788e"/>
<!-- right cluster -->
<path d="M79.300 100.500L79.300 89.500 85.400 79.500 98.500 78.200 109.800 80.800 115.800 87 141.900 89.500 142.700 99 140 100.800z" fill="#33343c"/>
<path d="M89.700 82l3.500-1.500 2.600 3-1.500 5.500-3.600 1z" fill="#c27426"/>
<path d="M94 79l9-.5 1 2.500-9 1z" fill="#8a5626"/>
<path d="M105.400 90.800l3 .5-.8 4-3-.8z" fill="#c56a22"/>
<ellipse cx="129.700" cy="92.800" rx="12.600" ry="5.300" fill="#4a3020"/>
<path d="M118 90c6-3 18-3 24 0l-.5 2.200c-6-2.400-17-2.400-23 0z" fill="#b9702a"/>
<path d="M119 93.500h17v3.200h-17z" fill="#a9642a"/>
<path d="M121 93.500v3.200M124 93.500v3.200M127 93.500v3.200M130 93.500v3.200M133 93.500v3.200" stroke="#3a2418" stroke-width=".9"/>
<rect x="112" y="84.500" width="13" height="3.500" fill="#2a2c30"/>
</g>
</svg>

<!-- ===== IMAGE 2 : top view ===== -->
<svg class="abs" style="left:1435.200px;top:309.200px" width="167.600" height="125.600" viewBox="0 0 168 126">
<defs>
<filter id="bl2" x="-5%" y="-5%" width="110%" height="110%"><feGaussianBlur stdDeviation=".6"/></filter>
<linearGradient id="hz" gradientUnits="userSpaceOnUse" x1="60" y1="62" x2="92" y2="30"><stop offset="0" stop-color="#bfe0c8" stop-opacity="0"/><stop offset=".5" stop-color="#c9e6d0" stop-opacity=".62"/><stop offset="1" stop-color="#bfe0c8" stop-opacity="0"/></linearGradient>
<radialGradient id="hz2" cx=".5" cy=".5" r=".5"><stop offset="0" stop-color="#cfe8d6" stop-opacity=".7"/><stop offset="1" stop-color="#cfe8d6" stop-opacity="0"/></radialGradient>
</defs>
<rect width="168" height="126" fill="#dddce0"/>
<rect x="157.500" width="10.500" height="126" fill="#e9e9ea"/>
<rect x="157" y="3" width="1" height="18" fill="#55555c"/>
<g filter="url(#bl2)">
<rect x="46.900" y="10" width="68.300" height="57.600" rx="2" fill="#3a9d5c"/>
<rect x="46.900" y="68" width="70.100" height="47.900" rx="2" fill="#2a9a4e"/>
<rect x="46.900" y="67.300" width="69" height="1" fill="#1f6f3a"/>
<path d="M56 26L92 14 112 30 112 66 86 67 60 62z" fill="url(#hz)"/>
<ellipse cx="100" cy="80" rx="10" ry="16" fill="url(#hz2)"/>
<rect x="68.3" y="41.3" width="1.5" height="1.1" fill="#e6f2ea" opacity="0.61"/>
<rect x="99.5" y="61.4" width="0.9" height="1.4" fill="#e6f2ea" opacity="0.66"/>
<rect x="79.2" y="29.8" width="1.8" height="1.2" fill="#e6f2ea" opacity="0.42"/>
<rect x="70.1" y="38.3" width="1.5" height="1.0" fill="#e6f2ea" opacity="0.73"/>
<rect x="79.3" y="43.2" width="1.9" height="1.1" fill="#e6f2ea" opacity="0.48"/>
<rect x="90.0" y="59.5" width="1.3" height="0.7" fill="#e6f2ea" opacity="0.69"/>
<rect x="82.2" y="39.5" width="2.3" height="1.4" fill="#e6f2ea" opacity="0.35"/>
<rect x="76.5" y="33.9" width="2.4" height="1.0" fill="#e6f2ea" opacity="0.38"/>
<rect x="89.3" y="48.0" width="0.9" height="0.9" fill="#e6f2ea" opacity="0.78"/>
<rect x="97.2" y="60.3" width="1.0" height="0.7" fill="#e6f2ea" opacity="0.71"/>
<rect x="63.4" y="34.0" width="1.1" height="1.3" fill="#e6f2ea" opacity="0.41"/>
<rect x="93.7" y="57.4" width="1.1" height="0.9" fill="#e6f2ea" opacity="0.79"/>
<rect x="61.6" y="44.8" width="1.8" height="0.7" fill="#e6f2ea" opacity="0.80"/>
<rect x="70.4" y="48.0" width="1.3" height="0.9" fill="#e6f2ea" opacity="0.38"/>
<rect x="61.9" y="31.0" width="1.8" height="1.0" fill="#e6f2ea" opacity="0.55"/>
<rect x="94.5" y="65.3" width="2.2" height="0.8" fill="#e6f2ea" opacity="0.42"/>
<rect x="102.0" y="58.6" width="1.1" height="1.3" fill="#e6f2ea" opacity="0.77"/>
<rect x="82.1" y="33.3" width="1.8" height="1.0" fill="#e6f2ea" opacity="0.40"/>
<rect x="67.9" y="30.4" width="1.9" height="0.9" fill="#e6f2ea" opacity="0.72"/>
<rect x="86.0" y="55.1" width="2.0" height="0.7" fill="#e6f2ea" opacity="0.45"/>
<rect x="90.5" y="43.5" width="1.2" height="1.5" fill="#e6f2ea" opacity="0.44"/>
<rect x="61.9" y="37.1" width="0.9" height="0.8" fill="#e6f2ea" opacity="0.52"/>
<rect x="89.9" y="54.8" width="2.2" height="1.6" fill="#e6f2ea" opacity="0.65"/>
<rect x="88.2" y="53.2" width="0.9" height="0.6" fill="#e6f2ea" opacity="0.76"/>
<rect x="92.7" y="54.9" width="1.8" height="1.1" fill="#e6f2ea" opacity="0.68"/>
<rect x="77.8" y="41.5" width="1.7" height="1.3" fill="#e6f2ea" opacity="0.76"/>
<rect x="89.9" y="46.3" width="2.3" height="1.0" fill="#e6f2ea" opacity="0.66"/>
<rect x="104.1" y="57.9" width="2.1" height="1.5" fill="#e6f2ea" opacity="0.61"/>
<rect x="82.4" y="57.8" width="1.8" height="0.7" fill="#e6f2ea" opacity="0.64"/>
<rect x="110.8" y="59.1" width="1.4" height="1.3" fill="#e6f2ea" opacity="0.61"/>
<rect x="81.8" y="43.7" width="2.0" height="0.6" fill="#e6f2ea" opacity="0.62"/>
<rect x="83.4" y="56.5" width="1.6" height="1.2" fill="#e6f2ea" opacity="0.76"/>
<rect x="77.8" y="39.6" width="1.9" height="0.8" fill="#e6f2ea" opacity="0.43"/>
<rect x="96.6" y="57.1" width="2.2" height="0.9" fill="#e6f2ea" opacity="0.65"/>
<rect x="104.7" y="58.9" width="1.7" height="0.9" fill="#e6f2ea" opacity="0.41"/>
<rect x="88.9" y="37.9" width="1.9" height="1.6" fill="#e6f2ea" opacity="0.47"/>
<rect x="64.5" y="37.6" width="1.1" height="1.0" fill="#e6f2ea" opacity="0.63"/>
<rect x="78.2" y="58.3" width="2.4" height="1.1" fill="#e6f2ea" opacity="0.38"/>
<rect x="64.5" y="29.9" width="1.9" height="1.2" fill="#e6f2ea" opacity="0.49"/>
<rect x="98.5" y="58.9" width="1.5" height="0.6" fill="#e6f2ea" opacity="0.72"/>
<rect x="73.1" y="40.0" width="1.8" height="1.0" fill="#e6f2ea" opacity="0.63"/>
<rect x="92.9" y="61.1" width="1.1" height="0.6" fill="#e6f2ea" opacity="0.56"/>
<rect x="94.1" y="60.0" width="1.4" height="1.3" fill="#e6f2ea" opacity="0.58"/>
<rect x="88.0" y="46.1" width="2.1" height="1.5" fill="#e6f2ea" opacity="0.39"/>
<rect x="100.6" y="60.5" width="1.5" height="1.2" fill="#e6f2ea" opacity="0.76"/>
<rect x="66.6" y="38.4" width="2.1" height="1.5" fill="#e6f2ea" opacity="0.56"/>
<rect x="92.0" y="62.7" width="2.1" height="1.2" fill="#e6f2ea" opacity="0.67"/>
<rect x="84.6" y="27.8" width="2.4" height="1.1" fill="#e6f2ea" opacity="0.71"/>
<rect x="85.4" y="35.2" width="1.4" height="0.7" fill="#e6f2ea" opacity="0.55"/>
<rect x="85.9" y="42.9" width="0.8" height="1.4" fill="#e6f2ea" opacity="0.38"/>
<rect x="98.1" y="63.6" width="2.1" height="0.7" fill="#e6f2ea" opacity="0.42"/>
<rect x="81.8" y="37.3" width="1.9" height="1.5" fill="#e6f2ea" opacity="0.57"/>
<rect x="105.5" y="66.4" width="1.6" height="0.9" fill="#e6f2ea" opacity="0.68"/>
<rect x="77.4" y="51.4" width="1.7" height="0.9" fill="#e6f2ea" opacity="0.52"/>
<rect x="100.8" y="58.0" width="2.2" height="1.6" fill="#e6f2ea" opacity="0.59"/>
<rect x="88.3" y="57.7" width="1.6" height="1.2" fill="#e6f2ea" opacity="0.36"/>
<rect x="96.7" y="64.3" width="2.1" height="1.2" fill="#e6f2ea" opacity="0.57"/>
<rect x="97.9" y="57.9" width="1.5" height="1.6" fill="#e6f2ea" opacity="0.77"/>
<rect x="70.2" y="40.2" width="1.5" height="1.4" fill="#e6f2ea" opacity="0.76"/>
<rect x="80.4" y="50.7" width="1.8" height="1.5" fill="#e6f2ea" opacity="0.41"/>
<rect x="98.6" y="58.6" width="1.2" height="1.3" fill="#e6f2ea" opacity="0.49"/>
<rect x="74.9" y="40.9" width="2.0" height="0.7" fill="#e6f2ea" opacity="0.58"/>
<rect x="74.9" y="46.0" width="1.5" height="1.0" fill="#e6f2ea" opacity="0.54"/>
<rect x="86.4" y="52.5" width="1.8" height="1.2" fill="#e6f2ea" opacity="0.59"/>
<rect x="88.7" y="53.0" width="1.2" height="1.3" fill="#e6f2ea" opacity="0.71"/>
<rect x="102.2" y="65.3" width="2.0" height="0.9" fill="#e6f2ea" opacity="0.39"/>
<rect x="87.6" y="65.0" width="1.0" height="1.0" fill="#e6f2ea" opacity="0.66"/>
<rect x="65.5" y="39.3" width="2.3" height="1.6" fill="#e6f2ea" opacity="0.40"/>
<rect x="83.6" y="41.1" width="1.9" height="0.8" fill="#e6f2ea" opacity="0.38"/>
<rect x="73.9" y="35.6" width="1.6" height="1.2" fill="#e6f2ea" opacity="0.42"/>
<rect x="73.0" y="47.7" width="2.4" height="1.5" fill="#e6f2ea" opacity="0.39"/>
<rect x="71.0" y="30.2" width="2.0" height="0.9" fill="#e6f2ea" opacity="0.56"/>
<rect x="76.3" y="52.0" width="0.8" height="1.3" fill="#e6f2ea" opacity="0.73"/>
<rect x="80.2" y="48.0" width="1.6" height="0.6" fill="#e6f2ea" opacity="0.75"/>
<rect x="81.7" y="57.2" width="1.6" height="1.6" fill="#e6f2ea" opacity="0.71"/>
<rect x="81.3" y="34.1" width="2.0" height="1.4" fill="#e6f2ea" opacity="0.53"/>
<rect x="106.4" y="55.9" width="2.0" height="1.4" fill="#e6f2ea" opacity="0.53"/>
<rect x="97.3" y="58.4" width="1.6" height="0.6" fill="#e6f2ea" opacity="0.51"/>
<rect x="85.7" y="49.9" width="2.3" height="1.3" fill="#e6f2ea" opacity="0.50"/>
<rect x="83.0" y="50.6" width="1.4" height="1.6" fill="#e6f2ea" opacity="0.64"/>
<rect x="97.4" y="78.5" width="0.8" height="1.2" fill="#e6f2ea" opacity="0.60"/>
<rect x="99.8" y="76.7" width="1.1" height="0.9" fill="#e6f2ea" opacity="0.34"/>
<rect x="104.4" y="73.9" width="1.5" height="1.5" fill="#e6f2ea" opacity="0.53"/>
<rect x="89.9" y="89.7" width="0.9" height="1.1" fill="#e6f2ea" opacity="0.60"/>
<rect x="104.5" y="70.3" width="1.5" height="0.8" fill="#e6f2ea" opacity="0.50"/>
<rect x="105.4" y="87.3" width="1.4" height="1.1" fill="#e6f2ea" opacity="0.54"/>
<rect x="98.6" y="83.0" width="1.6" height="0.9" fill="#e6f2ea" opacity="0.59"/>
<rect x="102.9" y="77.3" width="0.9" height="0.7" fill="#e6f2ea" opacity="0.60"/>
<rect x="104.1" y="76.4" width="0.9" height="1.5" fill="#e6f2ea" opacity="0.68"/>
<rect x="105.4" y="70.0" width="1.5" height="1.5" fill="#e6f2ea" opacity="0.40"/>
<rect x="103.5" y="80.7" width="1.5" height="1.5" fill="#e6f2ea" opacity="0.63"/>
<rect x="101.2" y="87.3" width="1.4" height="0.8" fill="#e6f2ea" opacity="0.32"/>
<rect x="100.9" y="85.0" width="1.7" height="1.0" fill="#e6f2ea" opacity="0.40"/>
<rect x="92.4" y="86.5" width="1.5" height="1.5" fill="#e6f2ea" opacity="0.68"/>
<rect x="96.5" y="89.1" width="2.0" height="1.3" fill="#e6f2ea" opacity="0.55"/>
<rect x="99.1" y="83.1" width="1.6" height="1.1" fill="#e6f2ea" opacity="0.55"/>
<rect x="97.2" y="90.2" width="2.2" height="1.4" fill="#e6f2ea" opacity="0.65"/>
<rect x="105.2" y="71.8" width="1.4" height="1.2" fill="#e6f2ea" opacity="0.34"/>
<rect x="99.5" y="83.6" width="1.7" height="1.1" fill="#e6f2ea" opacity="0.55"/>
<rect x="97.3" y="79.2" width="1.3" height="1.3" fill="#e6f2ea" opacity="0.64"/>
<rect x="107.0" y="75.5" width="1.7" height="1.3" fill="#e6f2ea" opacity="0.39"/>
<rect x="98.9" y="85.6" width="1.3" height="1.2" fill="#e6f2ea" opacity="0.70"/>
<rect x="94.5" y="76.3" width="2.1" height="1.0" fill="#e6f2ea" opacity="0.45"/>
<rect x="103.1" y="71.5" width="0.9" height="1.1" fill="#e6f2ea" opacity="0.49"/>
<rect x="95.0" y="91.4" width="0.9" height="0.8" fill="#e6f2ea" opacity="0.56"/>
<rect x="100.4" y="76.5" width="1.8" height="0.9" fill="#e6f2ea" opacity="0.36"/>
<rect x="99.3" y="75.8" width="1.0" height="1.2" fill="#e6f2ea" opacity="0.53"/>
<rect x="101.9" y="89.6" width="1.4" height="1.3" fill="#e6f2ea" opacity="0.42"/>
<rect x="93.5" y="81.8" width="2.1" height="0.8" fill="#e6f2ea" opacity="0.44"/>
<rect x="97.4" y="81.1" width="1.3" height="0.8" fill="#e6f2ea" opacity="0.53"/>
<rect x="89.4" y="87.7" width="1.6" height="0.8" fill="#e6f2ea" opacity="0.60"/>
<rect x="94.9" y="91.8" width="1.5" height="1.1" fill="#e6f2ea" opacity="0.53"/>
<rect x="90.6" y="88.8" width="0.9" height="1.1" fill="#e6f2ea" opacity="0.62"/>
<rect x="107.2" y="74.4" width="2.1" height="0.7" fill="#e6f2ea" opacity="0.55"/>
<rect x="101.6" y="69.1" width="1.1" height="0.8" fill="#e6f2ea" opacity="0.61"/>
<rect x="98.6" y="79.5" width="1.3" height="1.5" fill="#e6f2ea" opacity="0.57"/>
<rect x="93.1" y="80.7" width="1.8" height="1.4" fill="#e6f2ea" opacity="0.46"/>
<rect x="92.1" y="84.7" width="1.9" height="1.4" fill="#e6f2ea" opacity="0.66"/>
<rect x="91.7" y="90.2" width="1.8" height="1.3" fill="#e6f2ea" opacity="0.47"/>
<rect x="102.7" y="84.0" width="2.2" height="0.9" fill="#e6f2ea" opacity="0.37"/>
<rect x="106.0" y="34.7" width="1.200" height="1" fill="#eef6f0" opacity=".8"/>
<rect x="106.5" y="51.1" width="1.200" height="1" fill="#eef6f0" opacity=".8"/>
<rect x="105.3" y="31.3" width="1.200" height="1" fill="#eef6f0" opacity=".8"/>
<rect x="105.6" y="41.4" width="1.200" height="1" fill="#eef6f0" opacity=".8"/>
<rect x="108.9" y="27.4" width="1.200" height="1" fill="#eef6f0" opacity=".8"/>
<rect x="105.3" y="35.8" width="1.200" height="1" fill="#eef6f0" opacity=".8"/>
<rect x="107.9" y="49.3" width="1.200" height="1" fill="#eef6f0" opacity=".8"/>
<rect x="105.2" y="25.3" width="1.200" height="1" fill="#eef6f0" opacity=".8"/>
<rect x="105.9" y="28.5" width="1.200" height="1" fill="#eef6f0" opacity=".8"/>
<rect x="106.2" y="43.5" width="1.200" height="1" fill="#eef6f0" opacity=".8"/>
<rect x="108.0" y="28.7" width="1.200" height="1" fill="#eef6f0" opacity=".8"/>
<rect x="105.9" y="30.4" width="1.200" height="1" fill="#eef6f0" opacity=".8"/>
<rect x="105.9" y="44.7" width="1.200" height="1" fill="#eef6f0" opacity=".8"/>
<rect x="106.6" y="38.4" width="1.200" height="1" fill="#eef6f0" opacity=".8"/>
<!-- white connector -->
<rect x="52.900" y="13" width="7.900" height="31.500" fill="#dedfd8"/>
<rect x="54.800" y="15" width="2.600" height="27" fill="#b7b8b0"/>
<rect x="53.500" y="13.500" width="6.500" height="2" fill="#9a9a92"/>
<!-- black connector -->
<rect x="92.800" y="16" width="10.900" height="34" rx="1" fill="#1b2824"/>
<rect x="95.500" y="19.500" width="5.500" height="26" fill="#2b3a35"/>
<path d="M95.500 24h5.500M95.500 29h5.500M95.500 34h5.500M95.500 39h5.500" stroke="#1b2824" stroke-width=".8"/>
<!-- chips -->
<rect x="51.700" y="46.300" width="8.500" height="8" fill="#1c2a24"/>
<rect x="59.600" y="47.500" width="12.700" height="9.100" rx="2" fill="#18241e"/>
<rect x="68.300" y="14.500" width="3.600" height="3.600" fill="#203a2e"/>
<rect x="83" y="13" width="4.400" height="3.300" fill="#203a2e"/>
<rect x="83.500" y="20.500" width="4.200" height="1.800" fill="#203a2e"/>
<rect x="68" y="30.500" width="2.600" height="2.600" fill="#1f3028"/>
<rect x="84.300" y="45.500" width="3" height="3" fill="#1f3028"/>
<rect x="62" y="14" width="2" height="3" fill="#1f3028"/>
<rect x="102.800" y="12.800" width="2.800" height="2" fill="#b47040"/>
<rect x="108.300" y="54.400" width="3.400" height="2.400" fill="#b47040"/>
<!-- lower components -->
<rect x="54.700" y="62.600" width="10.300" height="15.700" fill="#4d5d4d"/>
<rect x="55" y="62.600" width="10" height="3.400" fill="#8c8c34"/>
<rect x="55.500" y="69" width="9" height="3" fill="#3c4a3e"/>
<rect x="67.400" y="66" width="13.300" height="20.800" rx="1" fill="#2a2a24"/>
<rect x="69" y="71" width="10" height="10" fill="#47473a"/>
<rect x="79.200" y="73" width="1.800" height="8" fill="#b86a1c"/>
<rect x="66" y="64" width="6" height="4" fill="#1e241e"/>
<circle cx="56.300" cy="79.500" r="1.900" fill="#ececec"/><circle cx="62.600" cy="79.500" r="1.900" fill="#ececec"/>
<rect x="66.200" y="88" width="12.100" height="14.500" rx="1" fill="#d6ce22"/>
<rect x="68" y="93.500" width="8.500" height="3" fill="#b9b23e"/>
<rect x="67" y="88.500" width="10" height="1.500" fill="#3a3a22"/>
<rect x="46.900" y="91.600" width="12.100" height="12.100" fill="#3a3a22"/>
<rect x="49.900" y="94" width="7.900" height="8.500" fill="#e0d224"/>
<path d="M81.300 98l7-3 7.500 3.500 1.800 7-3.800 5.500 1.500 5.500-8 1.500-6-6z" fill="#171717"/>
<rect x="85.500" y="99.800" width="6" height="3.200" fill="#8a4a1a"/>
<rect x="85" y="111.500" width="7" height="2.600" fill="#7a421a"/>
<circle cx="102.500" cy="107.300" r="5.600" fill="#9c7a24"/><circle cx="102.500" cy="107.300" r="3.500" fill="#22443a"/>
<path d="M97.500 105a5.500 5.500 0 0 1 10 0" fill="none" stroke="#c87a20" stroke-width="1"/>
<circle cx="67.400" cy="113.400" r="3.900" fill="#333"/><circle cx="67.400" cy="113.400" r="3" fill="#ececec"/>
<circle cx="77.100" cy="113.400" r="3.900" fill="#333"/><circle cx="77.100" cy="113.400" r="3" fill="#ececec"/>
<rect x="47.500" y="104" width="11" height="7" fill="#2f7a5a"/>
<path d="M83 86.500l4.800-3.800 4.800 1.200 4.900-3.600" fill="none" stroke="#62b47c" stroke-width=".7"/>
<!-- holes -->
<g fill="#d3d8d4"><circle cx="49.900" cy="12.400" r="2.200"/><circle cx="111.500" cy="14.300" r="2.200"/><circle cx="49.900" cy="64.400" r="2.400"/><circle cx="112.100" cy="63.800" r="2.400"/><circle cx="101.900" cy="64.400" r="2.300"/><circle cx="49.900" cy="75.300" r="2.400"/><circle cx="112.100" cy="74.100" r="2.400"/><circle cx="102.500" cy="78.300" r="1.900"/><circle cx="113.400" cy="94" r="2.400"/><circle cx="113.400" cy="102.500" r="2.400"/><circle cx="113.400" cy="111" r="2.400"/><circle cx="49.900" cy="112.800" r="2.400"/></g>
<!-- loose chip -->
<rect x="31" y="87.800" width="12.800" height="12.200" fill="#555a65"/>
<rect x="32.500" y="89.500" width="9.800" height="8.500" fill="#6a6f7b"/>
</g>
</svg>

<!-- ===== IMAGE 3 : on scale ===== -->
<svg class="abs" style="left:1682.200px;top:309.200px" width="167.600" height="125.600" viewBox="0 0 168 126">
<defs>
<filter id="bl3" x="-5%" y="-5%" width="110%" height="110%"><feGaussianBlur stdDeviation=".6"/></filter>
<linearGradient id="bg3" x1="0" y1="0" x2="0" y2="1"><stop offset="0" stop-color="#dedede"/><stop offset=".6" stop-color="#e8e8e8"/><stop offset="1" stop-color="#f5f5f5"/></linearGradient>
<linearGradient id="lcd" x1="0" y1="0" x2="1" y2="0"><stop offset="0" stop-color="#f2fff0"/><stop offset=".1" stop-color="#f8fff6"/><stop offset=".2" stop-color="#8af0a0"/><stop offset=".3" stop-color="#2ee23a"/><stop offset="1" stop-color="#1ecb22"/></linearGradient>
<linearGradient id="pcbL" x1="0" y1="0" x2="0" y2="1"><stop offset="0" stop-color="#1b6327"/><stop offset=".5" stop-color="#1f7a2d"/><stop offset="1" stop-color="#249234"/></linearGradient>
<linearGradient id="pcbR" x1="0" y1="0" x2="0" y2="1"><stop offset="0" stop-color="#1a5a28"/><stop offset=".5" stop-color="#1e6c2d"/><stop offset="1" stop-color="#238232"/></linearGradient>
</defs>
<rect width="168" height="126" fill="url(#bg3)"/>
<g filter="url(#bl3)">
<!-- scale body -->
<path d="M38 79L123.500 79 128.500 121.500 120 124.500 40 125 34.600 121z" fill="#2b3830"/>
<path d="M38 79h85.500l.8 7H37.200z" fill="#16201a"/>
<rect x="36.500" y="86" width="3" height="17" fill="#1c2820"/>
<!-- pcb -->
<path d="M22.400 4.800L76.800 5 76.800 80.300 10.600 78.400 12 36z" fill="url(#pcbL)"/>
<path d="M76.500 5L142.500 6.100 158.800 74.800 86 81 76.500 80.300z" fill="url(#pcbR)"/><path d="M77.200 5V80.300" stroke="#0f3d1a" stroke-width="1"/>
<path d="M10.600 78.400L76.800 80.300 86 81 158.800 74.800 158.600 77 86 83.200 11 80.600z" fill="#0f3a18"/>
<rect x="102.7" y="19.1" width="2.4" height="0.9" fill="#15401f"/>
<rect x="86.6" y="45.0" width="3.0" height="1.1" fill="#4f9d5c"/>
<rect x="86.3" y="35.5" width="2.8" height="0.9" fill="#3f8f4e"/>
<rect x="84.3" y="45.1" width="1.1" height="1.1" fill="#15401f"/>
<rect x="140.1" y="27.4" width="1.3" height="0.9" fill="#6bb078"/>
<rect x="87.2" y="44.3" width="1.4" height="0.9" fill="#2f8240"/>
<rect x="84.4" y="13.6" width="1.5" height="1.6" fill="#15401f"/>
<rect x="134.4" y="37.9" width="3.0" height="1.2" fill="#3f8f4e"/>
<rect x="97.1" y="44.5" width="2.2" height="1.9" fill="#2f8240"/>
<rect x="85.1" y="40.7" width="1.4" height="1.2" fill="#15401f"/>
<rect x="109.5" y="67.7" width="1.2" height="1.5" fill="#6bb078"/>
<rect x="103.8" y="31.0" width="2.1" height="1.8" fill="#4f9d5c"/>
<rect x="138.8" y="66.7" width="2.0" height="1.6" fill="#4f9d5c"/>
<rect x="131.2" y="28.6" width="2.3" height="1.6" fill="#15401f"/>
<rect x="99.9" y="33.1" width="2.5" height="0.8" fill="#15401f"/>
<rect x="104.9" y="46.7" width="2.1" height="1.1" fill="#6bb078"/>
<rect x="89.1" y="24.9" width="1.9" height="1.8" fill="#4f9d5c"/>
<rect x="91.6" y="34.1" width="1.6" height="1.0" fill="#15401f"/>
<rect x="140.5" y="26.7" width="1.9" height="1.2" fill="#15401f"/>
<rect x="92.3" y="23.9" width="1.5" height="1.4" fill="#15401f"/>
<rect x="92.8" y="26.9" width="1.3" height="1.4" fill="#15401f"/>
<rect x="119.6" y="67.2" width="2.5" height="1.4" fill="#15401f"/>
<rect x="112.0" y="62.3" width="3.1" height="1.6" fill="#15401f"/>
<rect x="107.5" y="33.9" width="1.2" height="1.6" fill="#4f9d5c"/>
<rect x="93.3" y="69.1" width="2.0" height="0.9" fill="#15401f"/>
<rect x="83.7" y="10.0" width="1.3" height="0.9" fill="#6bb078"/>
<rect x="94.6" y="32.6" width="2.4" height="1.9" fill="#15401f"/>
<rect x="139.4" y="69.6" width="2.0" height="1.4" fill="#4f9d5c"/>
<rect x="90.1" y="55.0" width="2.6" height="1.4" fill="#2f8240"/>
<rect x="91.3" y="11.4" width="3.1" height="1.4" fill="#3f8f4e"/>
<rect x="128.3" y="64.8" width="2.7" height="1.2" fill="#2f8240"/>
<rect x="98.3" y="32.0" width="1.4" height="1.7" fill="#15401f"/>
<rect x="117.9" y="40.2" width="2.4" height="1.5" fill="#3f8f4e"/>
<rect x="131.8" y="23.6" width="2.1" height="1.2" fill="#4f9d5c"/>
<rect x="113.1" y="21.6" width="2.3" height="1.2" fill="#2f8240"/>
<rect x="149.2" y="67.3" width="1.8" height="1.1" fill="#3f8f4e"/>
<rect x="112.9" y="30.3" width="2.1" height="2.0" fill="#15401f"/>
<rect x="138.8" y="38.8" width="2.4" height="1.8" fill="#4f9d5c"/>
<rect x="107.2" y="52.7" width="1.4" height="1.9" fill="#15401f"/>
<rect x="135.2" y="30.0" width="2.8" height="2.0" fill="#15401f"/>
<rect x="85.9" y="19.5" width="3.2" height="0.8" fill="#15401f"/>
<rect x="90.2" y="59.6" width="3.2" height="1.6" fill="#6bb078"/>
<rect x="90.9" y="42.9" width="1.0" height="1.8" fill="#2f8240"/>
<rect x="145.4" y="36.0" width="2.9" height="1.8" fill="#3f8f4e"/>
<rect x="82.0" y="22.8" width="2.1" height="1.7" fill="#6bb078"/>
<rect x="98.2" y="35.1" width="1.3" height="1.9" fill="#6bb078"/>
<rect x="137.9" y="62.7" width="1.3" height="1.0" fill="#15401f"/>
<rect x="81.3" y="36.4" width="1.4" height="0.8" fill="#3f8f4e"/>
<rect x="92.1" y="38.4" width="2.6" height="1.5" fill="#6bb078"/>
<rect x="25.7" y="10.7" width="1.2" height="1.3" fill="#3f9a4c"/>
<rect x="60.4" y="66.4" width="1.9" height="1.4" fill="#2f8a3e"/>
<rect x="46.5" y="38.6" width="2.9" height="1.5" fill="#16471f"/>
<rect x="70.3" y="65.1" width="1.4" height="1.2" fill="#4aa458"/>
<rect x="61.8" y="65.4" width="1.3" height="1.5" fill="#16471f"/>
<rect x="43.7" y="71.4" width="2.7" height="1.0" fill="#4aa458"/>
<rect x="64.0" y="62.4" width="2.4" height="1.7" fill="#4aa458"/>
<rect x="48.8" y="52.8" width="1.2" height="0.9" fill="#2f8a3e"/>
<rect x="71.2" y="48.6" width="2.6" height="0.9" fill="#2f8a3e"/>
<!-- white connector -->
<rect x="105.500" y="0" width="35.200" height="12.400" fill="#ecece6"/>
<path d="M105.500 9h35.200v3.400h-35.200z" fill="#d2d2ca"/>
<path d="M110.500 12h4.500l-2 6.500zM130 12h4.500l-2 6.500zM139.500 8l3.500-2.500-4.500 13z" fill="#e6e6de"/>
<rect x="116" y="12.400" width="13.500" height="5.500" fill="#2e302e"/>
<!-- transformers -->
<rect x="35.500" y="0" width="14.900" height="13.400" fill="#29231a"/>
<rect x="38.200" y="3.400" width="9.500" height="5.400" fill="#d9bc36"/>
<rect x="36" y="10.800" width="14" height="2.200" fill="#cdb040"/>
<rect x="35.900" y="17.400" width="17.200" height="14.900" rx="1" fill="#e7dda2"/>
<path d="M44 20l8 3v3l-8-3zM42 25l6 2v2l-6-2z" fill="#5a5030"/>
<rect x="36.500" y="28" width="16" height="3" fill="#d2c684"/>
<rect x="54" y="13.300" width="20.800" height="22.600" fill="#24272a"/>
<rect x="56" y="17" width="17" height="10" fill="#3a3e40"/>
<rect x="59.400" y="28.700" width="11.800" height="6.300" fill="#5c3b21"/>
<rect x="60.500" y="6" width="4" height="9" rx="1.500" fill="#4c4c4c"/><rect x="67" y="6.500" width="4.500" height="9" fill="#8a8a8a"/>
<rect x="72.500" y="9" width="5" height="8" fill="#3c4a44"/>
<rect x="79" y="8" width="6" height="11" rx="2" fill="#5d7a58"/>
<!-- caps left -->
<ellipse cx="21.900" cy="16.600" rx="4.200" ry="5.200" fill="#4e4e4e"/><ellipse cx="21.900" cy="14.300" rx="3.500" ry="2.300" fill="#b5b5b5"/>
<ellipse cx="20.600" cy="25" rx="4.600" ry="5.600" fill="#4a4a4a"/><ellipse cx="20.600" cy="22.600" rx="3.900" ry="2.500" fill="#b0b0b0"/>
<rect x="30.500" y="0" width="4" height="7" rx="1.500" fill="#2a2a2a"/>
<!-- dark cluster -->
<path d="M11.500 37l7-4.700 16 0 7 4.500 0 10-9 3.600-20-1.400z" fill="#353531"/>
<rect x="14.500" y="33.500" width="8" height="8.500" rx="1" fill="#7a4826"/>
<rect x="29.500" y="34" width="8" height="8" rx="1" fill="#73431f"/>
<path d="M15 35.500h7M15 37.500h7M15 39.500h7M30 36h7M30 38h7M30 40h7" stroke="#2a1a10" stroke-width=".7"/>
<rect x="11" y="46" width="2.500" height="7" fill="#e8e8e8"/>
<!-- toroid -->
<rect x="13.300" y="50.400" width="22.600" height="19" fill="#4a5a49"/>
<circle cx="24.200" cy="57.600" r="9.200" fill="#b8801f"/><circle cx="24.200" cy="57.600" r="6" fill="#26382f"/>
<path d="M16 54a9 9 0 0 1 16 0" fill="none" stroke="#d8a83a" stroke-width="1.200"/>
<ellipse cx="22.800" cy="64.600" rx="4.500" ry="3" fill="#19b91c"/>
<!-- relay / ICs -->
<rect x="91.500" y="13.300" width="11.300" height="12.700" rx="1" fill="#0e1210"/>
<rect x="93" y="15" width="8.500" height="4" fill="#1d2422"/>
<path d="M101 47l8.600-4.700V58.500L101 58z" fill="#181b1b"/>
<rect x="109.600" y="42.300" width="40.200" height="16.200" rx="1" fill="#1d2121"/>
<rect x="110.500" y="50.500" width="38.500" height="7" fill="#4b4f4e"/>
<path d="M120 42.300v8M130 42.300v8M140 42.300v8" stroke="#343838" stroke-width=".8"/>
<path d="M50.600 35.500l4.500 4 3.500 1 3.300 5-.2 5.500-5.500 4.300-.3 14.500" fill="none" stroke="#58a862" stroke-width=".8"/>
<rect x="85" y="43" width="14.500" height="6" fill="none" stroke="#4f9a5a" stroke-width=".6"/>
<g fill="#cfe4d2"><path d="M79.500 38.500l1.200 2.200h-2.400zM79.500 42.500l1.200 2.200h-2.400z"/></g>
<g fill="#7fb889"><rect x="100" y="64" width="36" height="1.500"/><rect x="103" y="67.500" width="28" height="1.500"/><rect x="100" y="71" width="12" height="1.200"/></g>
<!-- labels -->
<rect x="60.200" y="58.300" width="5.600" height="6" fill="#f0eef0"/><rect x="79.800" y="58.300" width="5.600" height="6" fill="#f0eef0"/>
<rect x="61.500" y="59.600" width="3" height="3.400" fill="#c9a0a8"/><rect x="81.100" y="59.600" width="3" height="3.400" fill="#c9a0a8"/>
<rect x="92.700" y="69.600" width="4.200" height="4.200" fill="#e0763a"/><rect x="151.400" y="60.600" width="4.200" height="4.200" fill="#e0763a"/>
<!-- holes -->
<g fill="#8f9690"><circle cx="16.500" cy="74.800" r="3.500"/><circle cx="28.300" cy="74.800" r="3.500"/><circle cx="40.500" cy="74.300" r="3.500"/><circle cx="68.500" cy="73.900" r="3.500"/><circle cx="82.500" cy="73.900" r="3.500"/><circle cx="154.300" cy="73" r="3"/></g>
<g fill="#b9a0a4"><circle cx="16.500" cy="74.800" r="1.500"/><circle cx="28.300" cy="74.800" r="1.500"/></g>
<g fill="#2a302c"><circle cx="40.500" cy="74.300" r="1.600"/><circle cx="68.500" cy="73.900" r="1.600"/><circle cx="82.500" cy="73.900" r="1.600"/></g>
<circle cx="154.300" cy="73" r="1.300" fill="#eee"/>
<!-- lcd -->
<rect x="45.500" y="84" width="71" height="19.800" rx="1" fill="url(#lcd)"/>
<circle cx="50.600" cy="87.300" r="1.300" fill="none" stroke="#2a6a2a" stroke-width=".6"/>
</g>
<g font-family="Liberation Mono, monospace" font-weight="bold" fill="#0b1a0b">
<text x="64" y="102" font-size="21.500" textLength="34" lengthAdjust="spacingAndGlyphs">253</text>
<text x="99.500" y="102" font-size="21.500" textLength="15.500" lengthAdjust="spacingAndGlyphs">19</text>
<rect x="97" y="99.500" width="2" height="2.200"/>
</g>
<g font-family="Liberation Serif, serif" font-size="6.500" fill="#7f8c82" filter="url(#bl3)">
<text x="46.600" y="118.300" textLength="12" lengthAdjust="spacingAndGlyphs">PCS</text><text x="65" y="118.300" opacity=".5" textLength="14.500" lengthAdjust="spacingAndGlyphs">OCUT</text><text x="85.400" y="118.300" textLength="13.400" lengthAdjust="spacingAndGlyphs">MODE</text><text x="104" y="118.300" opacity=".6" textLength="13" lengthAdjust="spacingAndGlyphs">TARE</text>
</g>
<path d="M81.500 108v14M100.500 108v14" stroke="#3c4a40" stroke-width=".5"/><rect x="100.500" y="110" width="19" height="11" fill="none" stroke="#3c4a40" stroke-width=".5"/>
</svg>

<svg class="abs" style="left:1799px;top:452px" width="20" height="20" viewBox="0 0 20 20" fill="none" stroke="#007fff" stroke-width="1.700" stroke-linecap="round" stroke-linejoin="round"><path d="M3.150 10.900v4.100a1.200 1.200 0 0 0 1.200 1.200h11.200a1.200 1.200 0 0 0 1.200-1.200V10.900"/><path d="M9.950 3.400v8.600"/><path d="M6.300 8.700l3.650 3.600L13.600 8.700"/></svg>
<div class="ax" style="left:1825.900px;top:455px;color:#007fff;-webkit-text-stroke:.3px #007fff;transform:scaleX(0.8878);transform-origin:0 50%">EXPORT</div>
<div class="pt" style="top:482px;height:28.600px;background:#ddeeff;border-radius:4px 4px 0 0;border-bottom:1px solid #cfd3d8"></div>
<div class="abs" style="left:1883.600px;top:489px;width:1.200px;height:13.500px;background:#cfd3d8"></div>
<div class="abs" style="left:1396.5px;top:489px;width:1.500px;height:13.500px;background:#c3d5ea"></div>
<div class="abs" style="left:1640.7px;top:489px;width:1.500px;height:13.500px;background:#c3d5ea"></div>
<div class="pt" style="top:535.1px;height:1px;background:#d6eaff"></div>
<div class="pt" style="top:560.0px;height:1px;background:#d6eaff"></div>
<div class="pt" style="top:585.0px;height:1px;background:#d6eaff"></div>
<div class="pt" style="top:610.0px;height:1px;background:#d6eaff"></div>
<div class="pt" style="top:635.0px;height:1px;background:#d6eaff"></div>
<div class="pt" style="top:659.8px;height:1px;background:#d6eaff"></div>
<div class="pt" style="top:684.7px;height:1px;background:#d6eaff"></div>
<div class="pt" style="top:709.7px;height:1px;background:#d6eaff"></div>
<div class="pt" style="top:734.7px;height:1px;background:#d6eaff"></div>
<div class="pt" style="top:759.7px;height:1px;background:#d6eaff"></div>
<div class="ax" style="left:1162.3px;top:489px;font-weight:bold;letter-spacing:-0.270px">Parameter</div>
<div class="ax" style="left:1406.5px;top:489px;font-weight:bold;letter-spacing:-0.182px">Value</div>
<div class="ax" style="left:1651.3px;top:489px;font-weight:bold;letter-spacing:-0.453px">Unit</div>
<div class="ax" style="left:1162.3px;top:515px;;letter-spacing:0.009px">Weight</div>
<div class="ax" style="left:1406.5px;top:515px;;letter-spacing:0.027px">253.19</div>
<div class="ax" style="left:1651.3px;top:515px;;letter-spacing:0.289px">gm</div>
<div class="ax" style="left:1162.3px;top:540px;;letter-spacing:0.002px">Length</div>
<div class="ax" style="left:1406.5px;top:540px;;letter-spacing:0.066px">183</div>
<div class="ax" style="left:1651.3px;top:540px;;letter-spacing:0.518px">mm</div>
<div class="ax" style="left:1162.3px;top:565px;;letter-spacing:0.037px">Width</div>
<div class="ax" style="left:1406.5px;top:565px;;letter-spacing:0.066px">120</div>
<div class="ax" style="left:1651.3px;top:565px;;letter-spacing:0.518px">mm</div>
<div class="ax" style="left:1162.3px;top:590px;;letter-spacing:0.066px">Height</div>
<div class="ax" style="left:1406.5px;top:590px;;letter-spacing:0.007px">28.6</div>
<div class="ax" style="left:1651.3px;top:590px;;letter-spacing:0.518px">mm</div>
<div class="ax" style="left:1162.3px;top:615px;;letter-spacing:0.097px">No. of Mounting Locations</div>
<div class="ax" style="left:1406.5px;top:615px;;letter-spacing:0.066px">1</div>
<div class="ax" style="left:1162.3px;top:640px;;letter-spacing:0.234px">Mounting To</div>
<div class="ax" style="left:1406.5px;top:640px;;letter-spacing:-0.227px">ECU Mounting Bracket - ECU Casing</div>
<div class="ax" style="left:1162.3px;top:665px;;letter-spacing:-0.078px">Supplier Name</div>
<div class="ax" style="left:1162.3px;top:690px;;letter-spacing:0.025px">Make</div>
<div class="ax" style="left:1406.5px;top:690px;;letter-spacing:-0.076px">In House</div>
<div class="ax" style="left:1162.3px;top:715px;;letter-spacing:0.041px">Primary Mfg Process</div>
<div class="ax" style="left:1406.5px;top:715px;;letter-spacing:0.073px">Cutting</div>
<div class="ax" style="left:1162.3px;top:740px;;letter-spacing:0.132px">Mounting Method</div>
<div class="ax" style="left:1406.5px;top:740px;;letter-spacing:0.094px">Placed in b/w</div>
<div class="ax" style="left:1162.3px;top:765px;;letter-spacing:-0.014px">Secondary Mfg Process</div>
<div class="ax" style="left:1406.5px;top:765px;;letter-spacing:0.073px">Cutting</div>
<!-- BOTTOM -->
<svg class="abs" style="left:390px;top:925px" width="220" height="27" viewBox="390 925 220 27"><path d="M397 952L422.700 929.200H572.900L599.300 952z" fill="#007fff"/><path d="M545.700 945.800L551 940.300 556.300 945.800" fill="none" stroke="#fff" stroke-width="2"/></svg>
<div class="abs" style="left:437.800px;top:933px;font-size:14px;line-height:18px;color:#fff;white-space:nowrap;-webkit-text-stroke:.3px #fff;letter-spacing:-0.155px">Quick Compare</div>
</body>
</html>
